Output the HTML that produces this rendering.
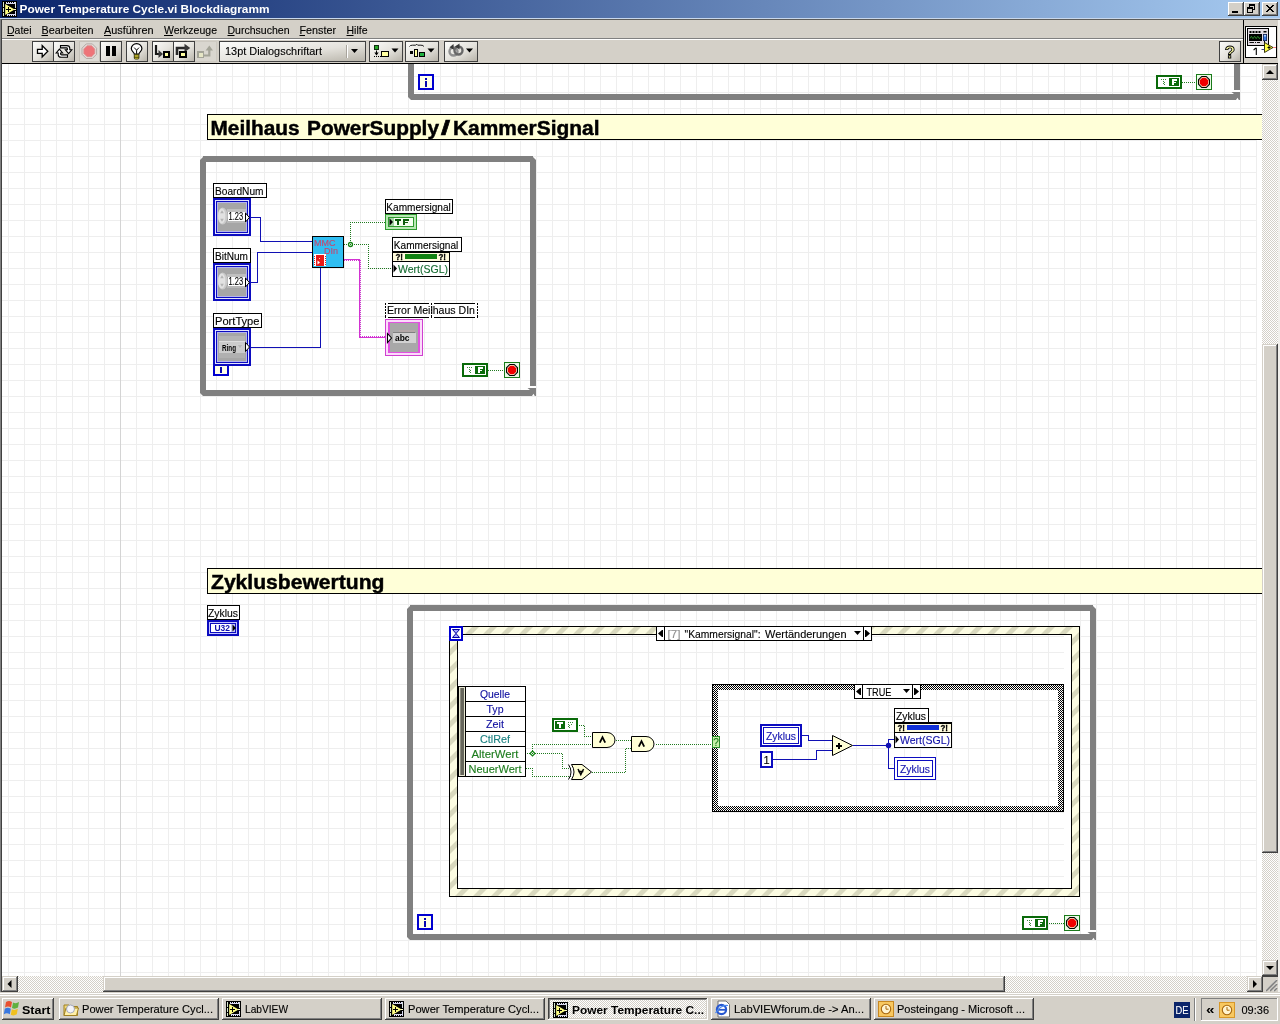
<!DOCTYPE html>
<html><head><meta charset="utf-8"><title>Power Temperature Cycle.vi Blockdiagramm</title>
<style>
html,body{margin:0;padding:0;background:#d4d0c8;overflow:hidden;}
body{width:1280px;height:1024px;font-family:"Liberation Sans",sans-serif;}
svg{display:block;position:absolute;left:0;top:0;will-change:transform;}
svg text{font-family:"Liberation Sans",sans-serif;}
</style></head><body>
<svg width="1280" height="1024" viewBox="0 0 1280 1024" shape-rendering="crispEdges">
<defs>
<linearGradient id="tg" x1="0" x2="1" y1="0" y2="0"><stop offset="0" stop-color="#0a246a"/><stop offset="1" stop-color="#a6caf0"/></linearGradient>
<linearGradient id="bg" x1="0" x2="1" y1="0" y2="1"><stop offset="0" stop-color="#fbfbf9"/><stop offset="0.55" stop-color="#e4e2dc"/><stop offset="1" stop-color="#b8b4aa"/></linearGradient>
<pattern id="grid" x="8" y="12" width="16" height="16" patternUnits="userSpaceOnUse"><rect width="16" height="16" fill="#fff"/><rect width="1" height="16" fill="#eeeeee"/><rect width="16" height="1" fill="#eeeeee"/></pattern>
<pattern id="dith" x="0" y="0" width="2" height="2" patternUnits="userSpaceOnUse"><rect width="2" height="2" fill="#fff"/><rect width="1" height="1" fill="#d4d0c8"/><rect x="1" y="1" width="1" height="1" fill="#d4d0c8"/></pattern>
<pattern id="chk" x="0" y="0" width="2" height="2" patternUnits="userSpaceOnUse"><rect width="2" height="2" fill="#fff"/><rect width="1" height="1" fill="#000"/><rect x="1" y="1" width="1" height="1" fill="#000"/></pattern>
<pattern id="stripe" x="10" y="0" width="18" height="18" patternUnits="userSpaceOnUse"><rect width="18" height="18" fill="#fcfce2"/><path d="M-2,11 L11,-2 L18,-2 L-2,18 Z M7,20 L20,7 L20,14 L14,20 Z" fill="#d9d9be" shape-rendering="geometricPrecision"/></pattern>
</defs>
<rect x="0" y="0" width="1280" height="1024" fill="#d4d0c8" />
<rect x="0" y="0" width="1280" height="18" fill="url(#tg)" />
<rect x="0" y="18" width="1280" height="1" fill="#c9d8ec" />
<rect x="0" y="19" width="1280" height="1" fill="#5c5c5a" />
<rect x="2" y="1" width="15" height="16" fill="#000" />
<rect x="3" y="2" width="1" height="5" fill="#d8e8d0" />
<rect x="3" y="8" width="1" height="4" fill="#d8e8d0" />
<rect x="3" y="13" width="1" height="3" fill="#d8e8d0" />
<rect x="6" y="3" width="10" height="1" fill="#d8d8f0" />
<rect x="7" y="14" width="9" height="1" fill="#d8d8f0" />
<rect x="6" y="2" width="1" height="1" fill="#e8e8ff" />
<rect x="7" y="15" width="1" height="1" fill="#e8e8ff" />
<rect x="8" y="2" width="1" height="1" fill="#e8e8ff" />
<rect x="9" y="15" width="1" height="1" fill="#e8e8ff" />
<rect x="10" y="2" width="1" height="1" fill="#e8e8ff" />
<rect x="11" y="15" width="1" height="1" fill="#e8e8ff" />
<rect x="12" y="2" width="1" height="1" fill="#e8e8ff" />
<rect x="13" y="15" width="1" height="1" fill="#e8e8ff" />
<rect x="14" y="2" width="1" height="1" fill="#e8e8ff" />
<rect x="15" y="15" width="1" height="1" fill="#e8e8ff" />
<rect x="15" y="2" width="1" height="6" fill="#d8e0e0" />
<rect x="15" y="11" width="1" height="5" fill="#d8d8f0" />
<path d="M5.2,4 L5.2,15 L14.6,9.5 Z" fill="#ffff86" stroke="none" stroke-width="0" shape-rendering="geometricPrecision"/>
<rect x="14" y="9" width="2" height="1" fill="#ffffd0" />
<rect x="6" y="9" width="5" height="1" fill="#000" />
<rect x="8" y="7" width="1" height="5" fill="#000" />
<text x="19.5" y="13" font-family="Liberation Sans, sans-serif" font-size="11" fill="#fff" font-weight="bold" text-anchor="start" textLength="250" lengthAdjust="spacingAndGlyphs" >Power Temperature Cycle.vi Blockdiagramm</text>
<rect x="1228" y="2" width="16" height="14" fill="#404040" />
<rect x="1228" y="2" width="15" height="13" fill="#ffffff" />
<rect x="1229" y="3" width="14" height="12" fill="#808080" />
<rect x="1229" y="3" width="13" height="11" fill="#d4d0c8" />
<rect x="1244" y="2" width="16" height="14" fill="#404040" />
<rect x="1244" y="2" width="15" height="13" fill="#ffffff" />
<rect x="1245" y="3" width="14" height="12" fill="#808080" />
<rect x="1245" y="3" width="13" height="11" fill="#d4d0c8" />
<rect x="1262" y="2" width="16" height="14" fill="#404040" />
<rect x="1262" y="2" width="15" height="13" fill="#ffffff" />
<rect x="1263" y="3" width="14" height="12" fill="#808080" />
<rect x="1263" y="3" width="13" height="11" fill="#d4d0c8" />
<rect x="1232" y="11" width="6" height="2" fill="#000" />
<rect x="1249" y="4" width="6" height="2" fill="#000" />
<rect x="1249" y="6" width="1" height="2" fill="#000" />
<rect x="1254" y="6" width="1" height="4" fill="#000" />
<rect x="1253" y="9" width="2" height="1" fill="#000" />
<rect x="1247" y="7" width="6" height="2" fill="#000" />
<rect x="1247" y="9" width="1" height="4" fill="#000" />
<rect x="1252" y="9" width="1" height="4" fill="#000" />
<rect x="1247" y="12" width="6" height="1" fill="#000" />
<path d="M1266,5 L1273,12 M1267,5 L1274,12 M1273,5 L1266,12 M1274,5 L1267,12" fill="none" stroke="#000" stroke-width="1" shape-rendering="geometricPrecision"/>
<rect x="2" y="20" width="1241" height="18" fill="#d4d0c8" />
<rect x="2" y="38" width="1241" height="1" fill="#808080" />
<rect x="2" y="39" width="1241" height="1" fill="#ffffff" />
<text x="7" y="34" font-family="Liberation Sans, sans-serif" font-size="11" fill="#000" font-weight="normal" text-anchor="start" textLength="24.5" lengthAdjust="spacingAndGlyphs" stroke="#000" stroke-width="0.12" >Datei</text>
<text x="41.5" y="34" font-family="Liberation Sans, sans-serif" font-size="11" fill="#000" font-weight="normal" text-anchor="start" textLength="52.0" lengthAdjust="spacingAndGlyphs" stroke="#000" stroke-width="0.12" >Bearbeiten</text>
<text x="104" y="34" font-family="Liberation Sans, sans-serif" font-size="11" fill="#000" font-weight="normal" text-anchor="start" textLength="49.5" lengthAdjust="spacingAndGlyphs" stroke="#000" stroke-width="0.12" >Ausführen</text>
<text x="164" y="34" font-family="Liberation Sans, sans-serif" font-size="11" fill="#000" font-weight="normal" text-anchor="start" textLength="53" lengthAdjust="spacingAndGlyphs" stroke="#000" stroke-width="0.12" >Werkzeuge</text>
<text x="227.5" y="34" font-family="Liberation Sans, sans-serif" font-size="11" fill="#000" font-weight="normal" text-anchor="start" textLength="62.0" lengthAdjust="spacingAndGlyphs" stroke="#000" stroke-width="0.12" >Durchsuchen</text>
<text x="299.5" y="34" font-family="Liberation Sans, sans-serif" font-size="11" fill="#000" font-weight="normal" text-anchor="start" textLength="36.5" lengthAdjust="spacingAndGlyphs" stroke="#000" stroke-width="0.12" >Fenster</text>
<text x="346.5" y="34" font-family="Liberation Sans, sans-serif" font-size="11" fill="#000" font-weight="normal" text-anchor="start" textLength="21.0" lengthAdjust="spacingAndGlyphs" stroke="#000" stroke-width="0.12" >Hilfe</text>
<rect x="7" y="35" width="7" height="1" fill="#000" shape-rendering="geometricPrecision"/>
<rect x="41.5" y="35" width="6.5" height="1" fill="#000" shape-rendering="geometricPrecision"/>
<rect x="104" y="35" width="7" height="1" fill="#000" shape-rendering="geometricPrecision"/>
<rect x="164" y="35" width="9" height="1" fill="#000" shape-rendering="geometricPrecision"/>
<rect x="227.5" y="35" width="7.0" height="1" fill="#000" shape-rendering="geometricPrecision"/>
<rect x="299.5" y="35" width="5.5" height="1" fill="#000" shape-rendering="geometricPrecision"/>
<rect x="346.5" y="35" width="7.0" height="1" fill="#000" shape-rendering="geometricPrecision"/>
<rect x="2" y="40" width="1241" height="23" fill="#d4d0c8" />
<rect x="0" y="63" width="1280" height="1" fill="#000" />
<rect x="0" y="19" width="1" height="973" fill="#808080" />
<rect x="1" y="20" width="1" height="972" fill="#404040" />
<rect x="32" y="41" width="22" height="21" fill="#404040" />
<rect x="33" y="42" width="20" height="19" fill="url(#bg)" />
<path d="M37.5,49.3 H42.2 V45.6 L47.8,51.3 L42.2,57 V53.3 H37.5 Z" fill="#fff" stroke="#000" stroke-width="1.3" shape-rendering="geometricPrecision"/>
<rect x="53" y="41" width="22" height="21" fill="#404040" />
<rect x="54" y="42" width="20" height="19" fill="url(#bg)" />
<path d="M60.5,45.6 H66.8 Q69.8,45.6 69.8,48.4 V49.8 H71.8 L68.6,53.6 L65.4,49.8 H67.4 V48.8 Q67.4,47.9 66.4,47.9 H60.5 Z" fill="#fff" stroke="#000" stroke-width="1.1" shape-rendering="geometricPrecision"/>
<g transform="rotate(180 64 51.4)"><path d="M60.5,45.6 H66.8 Q69.8,45.6 69.8,48.4 V49.8 H71.8 L68.6,53.6 L65.4,49.8 H67.4 V48.8 Q67.4,47.9 66.4,47.9 H60.5 Z" fill="#fff" stroke="#000" stroke-width="1.1" shape-rendering="geometricPrecision"/></g>
<rect x="79" y="41" width="21" height="21" fill="#c4c0b8" />
<rect x="80" y="42" width="19" height="19" fill="#dddbd5" />
<path d="M96.60,54.22 L92.32,58.50 L86.28,58.50 L82.00,54.22 L82.00,48.18 L86.28,43.90 L92.32,43.90 L96.60,48.18 Z" fill="#e4dcd8" stroke="#b4aaa6" stroke-width="1" shape-rendering="geometricPrecision"/>
<path d="M94.75,53.46 L91.56,56.65 L87.04,56.65 L83.85,53.46 L83.85,48.94 L87.04,45.75 L91.56,45.75 L94.75,48.94 Z" fill="#ee7478" stroke="#d89090" stroke-width="0.8" shape-rendering="geometricPrecision"/>
<rect x="100" y="41" width="22" height="21" fill="#404040" />
<rect x="101" y="42" width="20" height="19" fill="url(#bg)" />
<rect x="106" y="46" width="4" height="10" fill="#000" />
<rect x="112" y="46" width="4" height="10" fill="#000" />
<rect x="126" y="41" width="22" height="21" fill="#404040" />
<rect x="127" y="42" width="20" height="19" fill="url(#bg)" />
<g shape-rendering="geometricPrecision"><path d="M134.3,54.2 C134.3,52 131.3,51.6 131.3,48.6 A5.3,5 0 0 1 141.9,48.6 C141.9,51.6 138.9,52 138.9,54.2 Z" fill="#fff" stroke="#000" stroke-width="1.2"/><path d="M134.2,47.6 l2.4,2.6 l2.4,-2.6 M136.6,50.2 v3.6" fill="none" stroke="#000" stroke-width="1"/><rect x="134.3" y="54.4" width="4.6" height="4.6" rx="1" fill="#f0e040" stroke="#303000" stroke-width="0.9"/><path d="M134.3,56 h4.6 M134.3,57.5 h4.6" stroke="#303000" stroke-width="0.7"/></g>
<rect x="152" y="41" width="22" height="21" fill="#404040" />
<rect x="153" y="42" width="20" height="19" fill="url(#bg)" />
<path d="M156,45 V54 H159" fill="none" stroke="#181818" stroke-width="2.2" shape-rendering="geometricPrecision"/>
<path d="M158.5,50 L163,54 L158.5,58 Z" fill="#383838" stroke="none" stroke-width="0" shape-rendering="geometricPrecision"/>
<rect x="163" y="51" width="7" height="7" fill="#000" />
<rect x="164.5" y="52.5" width="3.5" height="3.5" fill="#ffffa0" />
<rect x="173" y="41" width="22" height="21" fill="#404040" />
<rect x="174" y="42" width="20" height="19" fill="url(#bg)" />
<path d="M177,55 V48 H185" fill="none" stroke="#282828" stroke-width="2.6" shape-rendering="geometricPrecision"/>
<path d="M184.5,43.8 L190.2,48 L184.5,52.2 Z" fill="#383838" stroke="none" stroke-width="0" shape-rendering="geometricPrecision"/>
<rect x="179" y="51" width="8" height="7" fill="#000" />
<rect x="180.5" y="52.5" width="4.5" height="3.5" fill="#ffffa0" />
<rect x="195" y="41" width="22" height="21" fill="#cdc9c1" />
<rect x="195" y="42" width="21" height="19" fill="#d9d6cf" />
<rect x="197" y="51" width="7" height="7" fill="#a4a498" />
<rect x="198.5" y="52.5" width="4.0" height="4.0" fill="#e6e6c6" />
<path d="M204,55.5 H209.3 V50" fill="none" stroke="#a4a498" stroke-width="2.2" shape-rendering="geometricPrecision"/>
<path d="M205.6,50.6 L209.3,45.6 L213,50.6 Z" fill="#a4a498" stroke="none" stroke-width="0" shape-rendering="geometricPrecision"/>
<rect x="219" y="41" width="147" height="21" fill="#404040" />
<rect x="220" y="42" width="145" height="19" fill="url(#bg)" />
<text x="225" y="54.5" font-family="Liberation Sans, sans-serif" font-size="11" fill="#000" font-weight="normal" text-anchor="start" textLength="97" lengthAdjust="spacingAndGlyphs" stroke="#000" stroke-width="0.12" >13pt Dialogschriftart</text>
<rect x="347" y="45" width="1" height="13" fill="#fff" />
<rect x="346" y="45" width="1" height="13" fill="#a8a49c" />
<path d="M351,49 h7 l-3.5,4 Z" fill="#000" stroke="none" stroke-width="0" shape-rendering="geometricPrecision"/>
<rect x="369" y="41" width="34" height="21" fill="#404040" />
<rect x="370" y="42" width="32" height="19" fill="url(#bg)" />
<rect x="374" y="45" width="5" height="5" fill="#103010" />
<rect x="375" y="46" width="3" height="3" fill="#28a828" />
<path d="M376.5,50.5 V55" fill="none" stroke="#000" stroke-width="1" shape-rendering="geometricPrecision"/>
<path d="M374.3,52.6 H378.7 L376.5,55.6 Z" fill="#000" stroke="none" stroke-width="0" shape-rendering="geometricPrecision"/>
<rect x="374" y="56" width="1" height="1" fill="#000" />
<rect x="376" y="56" width="1" height="1" fill="#000" />
<rect x="378" y="56" width="1" height="1" fill="#000" />
<rect x="380" y="56" width="1" height="1" fill="#000" />
<rect x="382" y="56" width="1" height="1" fill="#000" />
<rect x="384" y="56" width="1" height="1" fill="#000" />
<rect x="386" y="56" width="1" height="1" fill="#000" />
<rect x="388" y="56" width="1" height="1" fill="#000" />
<rect x="381" y="51" width="8" height="6" fill="#000" />
<rect x="382" y="52" width="6" height="3.5" fill="#ffffa0" />
<path d="M391.5,48.5 h7 l-3.5,4 Z" fill="#000" stroke="none" stroke-width="0" shape-rendering="geometricPrecision"/>
<rect x="405" y="41" width="34" height="21" fill="#404040" />
<rect x="406" y="42" width="32" height="19" fill="url(#bg)" />
<path d="M409.5,46.5 q0.5,-1.3 3,-1.3 h3.2 l1,-1 l1,1 h3.2 q2.5,0 3,1.3" fill="none" stroke="#000" stroke-width="0.9" shape-rendering="geometricPrecision"/>
<rect x="410" y="51" width="3" height="3" fill="#000" />
<rect x="414" y="49" width="4" height="8" fill="#000" />
<rect x="415" y="50" width="2" height="6" fill="#ffffa0" />
<rect x="419" y="52" width="6" height="5" fill="#000" />
<rect x="420" y="53" width="4" height="3" fill="#20b040" />
<path d="M427.5,48.5 h7 l-3.5,4 Z" fill="#000" stroke="none" stroke-width="0" shape-rendering="geometricPrecision"/>
<rect x="444" y="41" width="34" height="21" fill="#404040" />
<rect x="445" y="42" width="32" height="19" fill="url(#bg)" />
<g shape-rendering="geometricPrecision" fill="none"><circle cx="453.5" cy="51.5" r="4" stroke="#909090" stroke-width="2.4"/><circle cx="458.5" cy="50.5" r="4" stroke="#686868" stroke-width="2.4"/><path d="M453.5,44 L449.5,47.2 L453.8,49.8 Z" fill="#383838"/><path d="M459.5,43.4 L455,46.4 L459.6,49.4 Z" fill="#383838"/></g>
<path d="M466,48.5 h7 l-3.5,4 Z" fill="#000" stroke="none" stroke-width="0" shape-rendering="geometricPrecision"/>
<rect x="1219" y="41" width="22" height="21" fill="#404040" />
<rect x="1220" y="42" width="20" height="19" fill="url(#bg)" />
<g shape-rendering="geometricPrecision"><text x="1230" y="57.5" font-size="17" font-weight="bold" text-anchor="middle" fill="#ffffa8" stroke="#000" stroke-width="0.9" font-family="Liberation Sans, sans-serif">?</text></g>
<rect x="1243" y="20" width="1" height="43" fill="#000" />
<rect x="1244" y="20" width="36" height="43" fill="#d4d0c8" />
<rect x="1245" y="26" width="32" height="32" fill="#000" />
<rect x="1246" y="27" width="30" height="30" fill="#fff" />
<rect x="1247" y="28" width="22" height="18" fill="#000" />
<rect x="1248" y="29" width="20" height="16" fill="#e2dce2" />
<rect x="1249" y="34" width="13" height="7" fill="#000" />
<path d="M1250,38.5 l1.4,-2.2 l1.6,2.4 l1.6,-2.4 l1.6,2.4 l1.6,-2.4 l1.6,2.4 l1,-1.6" fill="none" stroke="#30a030" stroke-width="0.8" shape-rendering="geometricPrecision"/>
<rect x="1249.5" y="31" width="2.0" height="2" fill="#000" shape-rendering="geometricPrecision"/>
<rect x="1252.5" y="31" width="2.0" height="2" fill="#000" shape-rendering="geometricPrecision"/>
<rect x="1255.5" y="31" width="2.0" height="2" fill="#000" shape-rendering="geometricPrecision"/>
<rect x="1258.5" y="31" width="2.0" height="2" fill="#000" shape-rendering="geometricPrecision"/>
<rect x="1263.5" y="31" width="3.0" height="1.5" fill="#000" shape-rendering="geometricPrecision"/>
<rect x="1263" y="34" width="4" height="7" fill="#101030" />
<rect x="1263.6" y="34.6" width="2.800000000000182" height="5.799999999999997" fill="#3878e0" shape-rendering="geometricPrecision"/>
<rect x="1264" y="35.2" width="2" height="1.1999999999999957" fill="#c8e4ff" shape-rendering="geometricPrecision"/>
<rect x="1249.5" y="42" width="4.5" height="1" fill="#101010" shape-rendering="geometricPrecision"/>
<rect x="1255" y="42" width="1" height="1" fill="#101010" shape-rendering="geometricPrecision"/>
<rect x="1257" y="42" width="3" height="1" fill="#101010" shape-rendering="geometricPrecision"/>
<path d="M1253.6,50.2 L1255.4,48.4 H1256.3 V55" fill="none" stroke="#000" stroke-width="1.1" shape-rendering="geometricPrecision"/>
<rect x="1264" y="41" width="1" height="2" fill="#000" />
<path d="M1264.5,42.5 L1264.5,52.5 L1273,47.5 Z" fill="#ffff40" stroke="#202000" stroke-width="0.9" shape-rendering="geometricPrecision"/>
<rect x="1261.5" y="49" width="3.0" height="1" fill="#404080" shape-rendering="geometricPrecision"/>
<rect x="1267.5" y="47" width="3.0" height="1" fill="#000" shape-rendering="geometricPrecision"/>
<rect x="1268.5" y="46" width="1.0" height="3" fill="#000" shape-rendering="geometricPrecision"/>
<rect x="1273" y="47" width="3" height="1" fill="#f08080" />
<rect x="2" y="64" width="1260" height="912" fill="#fff" />
<rect x="2" y="64" width="1255" height="912" fill="url(#grid)" />
<rect x="120" y="64" width="1" height="912" fill="#d4d4d4" />
<clipPath id="cv"><rect x="2" y="64" width="1260" height="912"/></clipPath><g clip-path="url(#cv)">
<rect x="408" y="20" width="6" height="76" fill="#808080" />
<path d="M408,95 L408,97 L411,100 L414,100 L414,94 Z" fill="#808080" stroke="none" stroke-width="0" shape-rendering="geometricPrecision"/>
<rect x="414" y="94" width="820" height="6" fill="#808080" />
<rect x="1234" y="20" width="6" height="70" fill="#808080" />
<path d="M1231.5,92 L1240,92 L1240,100 L1238.8,100 L1237.5,97.8 L1236,100 L1234,100 L1234,94 Z" fill="#808080" stroke="none" stroke-width="0" shape-rendering="geometricPrecision"/>
<rect x="418" y="74" width="16" height="16" fill="#0000d0" />
<rect x="420" y="76" width="12" height="12" fill="#ffffe8" />
<rect x="425" y="78" width="2" height="2" fill="#0808b0" />
<rect x="425" y="81" width="2" height="6" fill="#0808b0" />
<rect x="1156" y="75" width="26" height="14" fill="#0a6a0a" />
<rect x="1158" y="77" width="22" height="10" fill="#fff" />
<rect x="1161" y="79" width="1" height="1" fill="#3c8c3c" />
<rect x="1163" y="79" width="1" height="1" fill="#3c8c3c" />
<rect x="1165" y="79" width="1" height="1" fill="#3c8c3c" />
<rect x="1163" y="81" width="1" height="1" fill="#3c8c3c" />
<rect x="1164" y="82" width="1" height="1" fill="#3c8c3c" />
<rect x="1163" y="83" width="1" height="1" fill="#3c8c3c" />
<rect x="1164" y="84" width="1" height="1" fill="#3c8c3c" />
<rect x="1169" y="78" width="10" height="8" fill="#0a6a0a" />
<rect x="1172" y="79" width="5" height="2" fill="#fff" />
<rect x="1172" y="79" width="2" height="6" fill="#fff" />
<rect x="1172" y="82" width="4" height="1" fill="#fff" />
<rect x="1196" y="74" width="16" height="16" fill="#1a7a1a" />
<rect x="1197" y="75" width="14" height="14" fill="#eafbe6" />
<path d="M1210.01,84.49 L1206.49,88.01 L1201.51,88.01 L1197.99,84.49 L1197.99,79.51 L1201.51,75.99 L1206.49,75.99 L1210.01,79.51 Z" fill="#000" stroke="none" stroke-width="0" shape-rendering="geometricPrecision"/>
<path d="M1208.90,84.03 L1206.03,86.90 L1201.97,86.90 L1199.10,84.03 L1199.10,79.97 L1201.97,77.10 L1206.03,77.10 L1208.90,79.97 Z" fill="#fff4d0" stroke="none" stroke-width="0" shape-rendering="geometricPrecision"/>
<path d="M1208.16,83.72 L1205.72,86.16 L1202.28,86.16 L1199.84,83.72 L1199.84,80.28 L1202.28,77.84 L1205.72,77.84 L1208.16,80.28 Z" fill="#f00000" stroke="none" stroke-width="0" shape-rendering="geometricPrecision"/>
<rect x="1182" y="82" width="1" height="1" fill="#1f7a1f" />
<rect x="1184" y="82" width="1" height="1" fill="#1f7a1f" />
<rect x="1186" y="82" width="1" height="1" fill="#1f7a1f" />
<rect x="1188" y="82" width="1" height="1" fill="#1f7a1f" />
<rect x="1190" y="82" width="1" height="1" fill="#1f7a1f" />
<rect x="1192" y="82" width="1" height="1" fill="#1f7a1f" />
<rect x="1194" y="82" width="1" height="1" fill="#1f7a1f" />
<rect x="207" y="114" width="1093" height="26" fill="#000" />
<rect x="208" y="115" width="1091" height="24" fill="#ffffd8" />
<text x="210.5" y="135" font-family="Liberation Sans, sans-serif" font-size="20.5" fill="#000" font-weight="bold" text-anchor="start" textLength="89" lengthAdjust="spacingAndGlyphs" stroke="#000" stroke-width="0.45" >Meilhaus</text>
<text x="307" y="135" font-family="Liberation Sans, sans-serif" font-size="20.5" fill="#000" font-weight="bold" text-anchor="start" textLength="132" lengthAdjust="spacingAndGlyphs" stroke="#000" stroke-width="0.45" >PowerSupply</text>
<text x="440.8" y="135" font-family="Liberation Sans, sans-serif" font-size="20.5" fill="#000" font-weight="bold" text-anchor="start" textLength="9.5" lengthAdjust="spacingAndGlyphs" stroke="#000" stroke-width="0.45" >/</text>
<text x="453" y="135" font-family="Liberation Sans, sans-serif" font-size="20.5" fill="#000" font-weight="bold" text-anchor="start" textLength="146.5" lengthAdjust="spacingAndGlyphs" stroke="#000" stroke-width="0.45" >KammerSignal</text>
<rect x="207" y="568" width="1093" height="26" fill="#000" />
<rect x="208" y="569" width="1091" height="24" fill="#ffffd8" />
<text x="211" y="589" font-family="Liberation Sans, sans-serif" font-size="20.5" fill="#000" font-weight="bold" text-anchor="start" textLength="173.5" lengthAdjust="spacingAndGlyphs" stroke="#000" stroke-width="0.45" >Zyklusbewertung</text>
<rect x="203" y="156" width="330" height="6" fill="#808080" />
<path d="M200,160 L204,156 L206,156 L206,162 L200,162 Z" fill="#808080" stroke="none" stroke-width="0" shape-rendering="geometricPrecision"/>
<path d="M536,160 L532,156 L530,156 L530,162 L536,162 Z" fill="#808080" stroke="none" stroke-width="0" shape-rendering="geometricPrecision"/>
<rect x="200" y="162" width="6" height="230" fill="#808080" />
<path d="M200,391 L200,393 L203,396 L206,396 L206,390 Z" fill="#808080" stroke="none" stroke-width="0" shape-rendering="geometricPrecision"/>
<rect x="206" y="390" width="324" height="6" fill="#808080" />
<rect x="530" y="162" width="6" height="224" fill="#808080" />
<path d="M527.5,388 L536,388 L536,396 L534.8,396 L533.5,393.8 L532,396 L530,396 L530,390 Z" fill="#808080" stroke="none" stroke-width="0" shape-rendering="geometricPrecision"/>
<rect x="213" y="360" width="16" height="16" fill="#0000d0" />
<rect x="215" y="362" width="12" height="12" fill="#ffffe8" />
<rect x="220" y="364" width="2" height="2" fill="#0808b0" />
<rect x="220" y="367" width="2" height="6" fill="#0808b0" />
<rect x="213" y="183" width="54" height="15" fill="#000" />
<rect x="214" y="184" width="52" height="13" fill="#fff" />
<text x="215" y="194.5" font-family="Liberation Sans, sans-serif" font-size="11" fill="#000" font-weight="normal" text-anchor="start" textLength="48.5" lengthAdjust="spacingAndGlyphs" stroke="#000" stroke-width="0.12" >BoardNum</text>
<rect x="213" y="198" width="38" height="38" fill="#0c0cc0" />
<rect x="215" y="200" width="34" height="34" fill="#e4e4ff" />
<rect x="216" y="201" width="32" height="32" fill="#0c0cc0" />
<rect x="217" y="202" width="30" height="30" fill="#b4b4f0" />
<rect x="218" y="203" width="28" height="28" fill="#a6a6a6" />
<g shape-rendering="geometricPrecision"><ellipse cx="222.6" cy="216" rx="5" ry="8.6" fill="#cacaca"/><ellipse cx="221.8" cy="216" rx="3.6" ry="7.6" fill="#e2e2e2"/><path d="M222,210.3 l-1.8,3 h3.6 Z M222,221.7 l-1.8,-3 h3.6 Z" fill="#b4b4b4"/></g>
<rect x="227" y="209" width="19" height="3" fill="#c0c0c0" />
<rect x="227" y="221" width="18" height="2" fill="#b8b8b8" />
<rect x="228" y="212" width="17" height="9" fill="#fff" />
<text x="228.6" y="220" font-family="Liberation Sans, sans-serif" font-size="10" fill="#000" font-weight="normal" text-anchor="start" textLength="14.5" lengthAdjust="spacingAndGlyphs" stroke="#000" stroke-width="0.12" >1.23</text>
<path d="M245.5,213 L249.3,217.5 L245.5,222 Z" fill="#fff" stroke="#000" stroke-width="1" shape-rendering="geometricPrecision"/>
<rect x="213" y="248" width="38" height="15" fill="#000" />
<rect x="214" y="249" width="36" height="13" fill="#fff" />
<text x="215" y="259.5" font-family="Liberation Sans, sans-serif" font-size="11" fill="#000" font-weight="normal" text-anchor="start" textLength="33" lengthAdjust="spacingAndGlyphs" stroke="#000" stroke-width="0.12" >BitNum</text>
<rect x="213" y="263" width="38" height="38" fill="#0c0cc0" />
<rect x="215" y="265" width="34" height="34" fill="#e4e4ff" />
<rect x="216" y="266" width="32" height="32" fill="#0c0cc0" />
<rect x="217" y="267" width="30" height="30" fill="#b4b4f0" />
<rect x="218" y="268" width="28" height="28" fill="#a6a6a6" />
<g shape-rendering="geometricPrecision"><ellipse cx="222.6" cy="281" rx="5" ry="8.6" fill="#cacaca"/><ellipse cx="221.8" cy="281" rx="3.6" ry="7.6" fill="#e2e2e2"/><path d="M222,275.3 l-1.8,3 h3.6 Z M222,286.7 l-1.8,-3 h3.6 Z" fill="#b4b4b4"/></g>
<rect x="227" y="274" width="19" height="3" fill="#c0c0c0" />
<rect x="227" y="286" width="18" height="2" fill="#b8b8b8" />
<rect x="228" y="277" width="17" height="9" fill="#fff" />
<text x="228.6" y="285" font-family="Liberation Sans, sans-serif" font-size="10" fill="#000" font-weight="normal" text-anchor="start" textLength="14.5" lengthAdjust="spacingAndGlyphs" stroke="#000" stroke-width="0.12" >1.23</text>
<path d="M245.5,278 L249.3,282.5 L245.5,287 Z" fill="#fff" stroke="#000" stroke-width="1" shape-rendering="geometricPrecision"/>
<rect x="213" y="313" width="49" height="15" fill="#000" />
<rect x="214" y="314" width="47" height="13" fill="#fff" />
<text x="215" y="324.5" font-family="Liberation Sans, sans-serif" font-size="11" fill="#000" font-weight="normal" text-anchor="start" textLength="44.5" lengthAdjust="spacingAndGlyphs" stroke="#000" stroke-width="0.12" >PortType</text>
<rect x="213" y="328" width="38" height="38" fill="#0c0cc0" />
<rect x="215" y="330" width="34" height="34" fill="#e4e4ff" />
<rect x="216" y="331" width="32" height="32" fill="#0c0cc0" />
<rect x="217" y="332" width="30" height="30" fill="#b4b4f0" />
<rect x="218" y="333" width="28" height="28" fill="#a6a6a6" />
<rect x="219" y="336" width="26" height="5" fill="#b4b4b4" />
<rect x="219" y="341" width="26" height="12" fill="#cccccc" />
<rect x="219" y="341" width="26" height="1" fill="#dedede" />
<rect x="219" y="353" width="26" height="5" fill="#b0b0b0" />
<text x="222" y="351" font-family="Liberation Sans, sans-serif" font-size="8.5" fill="#000" font-weight="bold" text-anchor="start" textLength="14" lengthAdjust="spacingAndGlyphs" >Ring</text>
<path d="M237,344.5 h6 l-3,4.5 Z" fill="#b8b8b8" stroke="#d8d8d8" stroke-width="0.6" shape-rendering="geometricPrecision"/>
<path d="M245.5,342.5 L249.5,347 L245.5,351.5 Z" fill="#fff" stroke="#000" stroke-width="1" shape-rendering="geometricPrecision"/>
<path d="M251.5,217.5 L260.5,217.5 L260.5,241.5 L312.5,241.5" fill="none" stroke="#1010b4" stroke-width="1" stroke-linecap="square" stroke-linejoin="miter" />
<path d="M251.5,282.5 L257.5,282.5 L257.5,252.5 L312.5,252.5" fill="none" stroke="#1010b4" stroke-width="1" stroke-linecap="square" stroke-linejoin="miter" />
<path d="M251.5,347.5 L320.5,347.5 L320.5,268.5" fill="none" stroke="#1010b4" stroke-width="1" stroke-linecap="square" stroke-linejoin="miter" />
<rect x="312" y="236" width="32" height="32" fill="#000" />
<rect x="313" y="237" width="30" height="30" fill="#30bef2" />
<text x="314" y="246" font-family="Liberation Sans, sans-serif" font-size="9.5" fill="#c8466e" font-weight="normal" text-anchor="start" textLength="21.5" lengthAdjust="spacingAndGlyphs" stroke="#c8466e" stroke-width="0.12" >MMC</text>
<text x="324" y="254.3" font-family="Liberation Sans, sans-serif" font-size="9.5" fill="#c8466e" font-weight="normal" text-anchor="start" textLength="14" lengthAdjust="spacingAndGlyphs" stroke="#c8466e" stroke-width="0.12" >DIn</text>
<rect x="314" y="254" width="12" height="12" fill="#fff" />
<rect x="316" y="255" width="8" height="11" fill="#e81818" />
<rect x="314" y="256" width="1" height="1" fill="#e81818" />
<rect x="325" y="256" width="1" height="1" fill="#e81818" />
<rect x="314" y="258" width="1" height="1" fill="#e81818" />
<rect x="325" y="258" width="1" height="1" fill="#e81818" />
<rect x="314" y="260" width="1" height="1" fill="#e81818" />
<rect x="325" y="260" width="1" height="1" fill="#e81818" />
<rect x="314" y="262" width="1" height="1" fill="#e81818" />
<rect x="325" y="262" width="1" height="1" fill="#e81818" />
<rect x="314" y="264" width="1" height="1" fill="#e81818" />
<rect x="325" y="264" width="1" height="1" fill="#e81818" />
<path d="M317.5,260.5 L320,262.5 L317.5,264.5 Z" fill="#fff" stroke="none" stroke-width="0" shape-rendering="geometricPrecision"/>
<rect x="319" y="258" width="1" height="1" fill="#ffd0a0" />
<rect x="344" y="244" width="1" height="1" fill="#1f7a1f" />
<rect x="346" y="244" width="1" height="1" fill="#1f7a1f" />
<rect x="348" y="244" width="1" height="1" fill="#1f7a1f" />
<rect x="350" y="222" width="1" height="1" fill="#1f7a1f" />
<rect x="350" y="224" width="1" height="1" fill="#1f7a1f" />
<rect x="350" y="226" width="1" height="1" fill="#1f7a1f" />
<rect x="350" y="228" width="1" height="1" fill="#1f7a1f" />
<rect x="350" y="230" width="1" height="1" fill="#1f7a1f" />
<rect x="350" y="232" width="1" height="1" fill="#1f7a1f" />
<rect x="350" y="234" width="1" height="1" fill="#1f7a1f" />
<rect x="350" y="236" width="1" height="1" fill="#1f7a1f" />
<rect x="350" y="238" width="1" height="1" fill="#1f7a1f" />
<rect x="350" y="240" width="1" height="1" fill="#1f7a1f" />
<rect x="350" y="222" width="1" height="1" fill="#1f7a1f" />
<rect x="352" y="222" width="1" height="1" fill="#1f7a1f" />
<rect x="354" y="222" width="1" height="1" fill="#1f7a1f" />
<rect x="356" y="222" width="1" height="1" fill="#1f7a1f" />
<rect x="358" y="222" width="1" height="1" fill="#1f7a1f" />
<rect x="360" y="222" width="1" height="1" fill="#1f7a1f" />
<rect x="362" y="222" width="1" height="1" fill="#1f7a1f" />
<rect x="364" y="222" width="1" height="1" fill="#1f7a1f" />
<rect x="366" y="222" width="1" height="1" fill="#1f7a1f" />
<rect x="368" y="222" width="1" height="1" fill="#1f7a1f" />
<rect x="370" y="222" width="1" height="1" fill="#1f7a1f" />
<rect x="372" y="222" width="1" height="1" fill="#1f7a1f" />
<rect x="374" y="222" width="1" height="1" fill="#1f7a1f" />
<rect x="376" y="222" width="1" height="1" fill="#1f7a1f" />
<rect x="378" y="222" width="1" height="1" fill="#1f7a1f" />
<rect x="380" y="222" width="1" height="1" fill="#1f7a1f" />
<rect x="382" y="222" width="1" height="1" fill="#1f7a1f" />
<rect x="384" y="222" width="1" height="1" fill="#1f7a1f" />
<rect x="354" y="244" width="1" height="1" fill="#1f7a1f" />
<rect x="356" y="244" width="1" height="1" fill="#1f7a1f" />
<rect x="358" y="244" width="1" height="1" fill="#1f7a1f" />
<rect x="360" y="244" width="1" height="1" fill="#1f7a1f" />
<rect x="362" y="244" width="1" height="1" fill="#1f7a1f" />
<rect x="364" y="244" width="1" height="1" fill="#1f7a1f" />
<rect x="366" y="244" width="1" height="1" fill="#1f7a1f" />
<rect x="368" y="244" width="1" height="1" fill="#1f7a1f" />
<rect x="368" y="244" width="1" height="1" fill="#1f7a1f" />
<rect x="368" y="246" width="1" height="1" fill="#1f7a1f" />
<rect x="368" y="248" width="1" height="1" fill="#1f7a1f" />
<rect x="368" y="250" width="1" height="1" fill="#1f7a1f" />
<rect x="368" y="252" width="1" height="1" fill="#1f7a1f" />
<rect x="368" y="254" width="1" height="1" fill="#1f7a1f" />
<rect x="368" y="256" width="1" height="1" fill="#1f7a1f" />
<rect x="368" y="258" width="1" height="1" fill="#1f7a1f" />
<rect x="368" y="260" width="1" height="1" fill="#1f7a1f" />
<rect x="368" y="262" width="1" height="1" fill="#1f7a1f" />
<rect x="368" y="264" width="1" height="1" fill="#1f7a1f" />
<rect x="368" y="266" width="1" height="1" fill="#1f7a1f" />
<rect x="368" y="268" width="1" height="1" fill="#1f7a1f" />
<rect x="368" y="268" width="1" height="1" fill="#1f7a1f" />
<rect x="370" y="268" width="1" height="1" fill="#1f7a1f" />
<rect x="372" y="268" width="1" height="1" fill="#1f7a1f" />
<rect x="374" y="268" width="1" height="1" fill="#1f7a1f" />
<rect x="376" y="268" width="1" height="1" fill="#1f7a1f" />
<rect x="378" y="268" width="1" height="1" fill="#1f7a1f" />
<rect x="380" y="268" width="1" height="1" fill="#1f7a1f" />
<rect x="382" y="268" width="1" height="1" fill="#1f7a1f" />
<rect x="384" y="268" width="1" height="1" fill="#1f7a1f" />
<rect x="386" y="268" width="1" height="1" fill="#1f7a1f" />
<rect x="388" y="268" width="1" height="1" fill="#1f7a1f" />
<rect x="390" y="268" width="1" height="1" fill="#1f7a1f" />
<g shape-rendering="geometricPrecision"><circle cx="350.5" cy="244.5" r="2" fill="#fff" stroke="#128212" stroke-width="1.3"/><rect x="350" y="244" width="1" height="1" fill="#128212"/></g>
<rect x="344" y="259" width="16" height="1" fill="#d232d2" />
<rect x="359" y="259" width="1" height="79" fill="#d232d2" />
<rect x="359" y="337" width="26" height="1" fill="#d232d2" />
<rect x="344" y="260" width="1" height="1" fill="#d232d2" />
<rect x="346" y="260" width="1" height="1" fill="#d232d2" />
<rect x="348" y="260" width="1" height="1" fill="#d232d2" />
<rect x="350" y="260" width="1" height="1" fill="#d232d2" />
<rect x="352" y="260" width="1" height="1" fill="#d232d2" />
<rect x="354" y="260" width="1" height="1" fill="#d232d2" />
<rect x="356" y="260" width="1" height="1" fill="#d232d2" />
<rect x="358" y="260" width="1" height="1" fill="#d232d2" />
<rect x="360" y="260" width="1" height="1" fill="#d232d2" />
<rect x="360" y="262" width="1" height="1" fill="#d232d2" />
<rect x="360" y="264" width="1" height="1" fill="#d232d2" />
<rect x="360" y="266" width="1" height="1" fill="#d232d2" />
<rect x="360" y="268" width="1" height="1" fill="#d232d2" />
<rect x="360" y="270" width="1" height="1" fill="#d232d2" />
<rect x="360" y="272" width="1" height="1" fill="#d232d2" />
<rect x="360" y="274" width="1" height="1" fill="#d232d2" />
<rect x="360" y="276" width="1" height="1" fill="#d232d2" />
<rect x="360" y="278" width="1" height="1" fill="#d232d2" />
<rect x="360" y="280" width="1" height="1" fill="#d232d2" />
<rect x="360" y="282" width="1" height="1" fill="#d232d2" />
<rect x="360" y="284" width="1" height="1" fill="#d232d2" />
<rect x="360" y="286" width="1" height="1" fill="#d232d2" />
<rect x="360" y="288" width="1" height="1" fill="#d232d2" />
<rect x="360" y="290" width="1" height="1" fill="#d232d2" />
<rect x="360" y="292" width="1" height="1" fill="#d232d2" />
<rect x="360" y="294" width="1" height="1" fill="#d232d2" />
<rect x="360" y="296" width="1" height="1" fill="#d232d2" />
<rect x="360" y="298" width="1" height="1" fill="#d232d2" />
<rect x="360" y="300" width="1" height="1" fill="#d232d2" />
<rect x="360" y="302" width="1" height="1" fill="#d232d2" />
<rect x="360" y="304" width="1" height="1" fill="#d232d2" />
<rect x="360" y="306" width="1" height="1" fill="#d232d2" />
<rect x="360" y="308" width="1" height="1" fill="#d232d2" />
<rect x="360" y="310" width="1" height="1" fill="#d232d2" />
<rect x="360" y="312" width="1" height="1" fill="#d232d2" />
<rect x="360" y="314" width="1" height="1" fill="#d232d2" />
<rect x="360" y="316" width="1" height="1" fill="#d232d2" />
<rect x="360" y="318" width="1" height="1" fill="#d232d2" />
<rect x="360" y="320" width="1" height="1" fill="#d232d2" />
<rect x="360" y="322" width="1" height="1" fill="#d232d2" />
<rect x="360" y="324" width="1" height="1" fill="#d232d2" />
<rect x="360" y="326" width="1" height="1" fill="#d232d2" />
<rect x="360" y="328" width="1" height="1" fill="#d232d2" />
<rect x="360" y="330" width="1" height="1" fill="#d232d2" />
<rect x="360" y="332" width="1" height="1" fill="#d232d2" />
<rect x="360" y="334" width="1" height="1" fill="#d232d2" />
<rect x="360" y="336" width="1" height="1" fill="#d232d2" />
<rect x="362" y="336" width="1" height="1" fill="#d232d2" />
<rect x="364" y="336" width="1" height="1" fill="#d232d2" />
<rect x="366" y="336" width="1" height="1" fill="#d232d2" />
<rect x="368" y="336" width="1" height="1" fill="#d232d2" />
<rect x="370" y="336" width="1" height="1" fill="#d232d2" />
<rect x="372" y="336" width="1" height="1" fill="#d232d2" />
<rect x="374" y="336" width="1" height="1" fill="#d232d2" />
<rect x="376" y="336" width="1" height="1" fill="#d232d2" />
<rect x="378" y="336" width="1" height="1" fill="#d232d2" />
<rect x="380" y="336" width="1" height="1" fill="#d232d2" />
<rect x="382" y="336" width="1" height="1" fill="#d232d2" />
<rect x="384" y="336" width="1" height="1" fill="#d232d2" />
<rect x="385" y="199" width="68" height="15" fill="#000" />
<rect x="386" y="200" width="66" height="13" fill="#fff" />
<text x="386.3" y="210.5" font-family="Liberation Sans, sans-serif" font-size="11" fill="#000" font-weight="normal" text-anchor="start" textLength="64.5" lengthAdjust="spacingAndGlyphs" stroke="#000" stroke-width="0.12" >Kammersignal</text>
<rect x="385" y="214" width="32" height="16" fill="#2c9a2c" />
<rect x="386" y="215" width="30" height="14" fill="#b8e8b4" />
<rect x="388" y="217" width="26" height="10" fill="#2c9a2c" />
<rect x="389" y="218" width="24" height="8" fill="#f4fff0" />
<rect x="389" y="218" width="5" height="8" fill="#a4d4a4" />
<path d="M389.5,218.3 L393,222 L389.5,225.7 Z" fill="#000" stroke="none" stroke-width="0" shape-rendering="geometricPrecision"/>
<rect x="395" y="219" width="6" height="2" fill="#0c5c0c" />
<rect x="397" y="219" width="2" height="6" fill="#0c5c0c" />
<rect x="403" y="219" width="2" height="6" fill="#0c5c0c" />
<rect x="403" y="219" width="6" height="2" fill="#0c5c0c" />
<rect x="403" y="222" width="5" height="1" fill="#0c5c0c" />
<rect x="392" y="237" width="70" height="15" fill="#000" />
<rect x="393" y="238" width="68" height="13" fill="#fff" />
<text x="393.8" y="248.5" font-family="Liberation Sans, sans-serif" font-size="11" fill="#000" font-weight="normal" text-anchor="start" textLength="64.5" lengthAdjust="spacingAndGlyphs" stroke="#000" stroke-width="0.12" >Kammersignal</text>
<rect x="392" y="251" width="58" height="26" fill="#000" />
<rect x="393" y="253" width="56" height="8" fill="#fffbdc" />
<rect x="393" y="262" width="56" height="14" fill="#fff" />
<text x="395.5" y="260.3" font-family="Liberation Sans, sans-serif" font-size="8.5" fill="#000" font-weight="bold" text-anchor="start" textLength="7.5" lengthAdjust="spacingAndGlyphs" stroke="#000" stroke-width="0.3">?!</text>
<text x="438.5" y="260.3" font-family="Liberation Sans, sans-serif" font-size="8.5" fill="#000" font-weight="bold" text-anchor="start" textLength="7.5" lengthAdjust="spacingAndGlyphs" stroke="#000" stroke-width="0.3">?!</text>
<rect x="405" y="254" width="32" height="5" fill="#128212" />
<path d="M393.5,264.5 L397,268.5 L393.5,272.5 Z" fill="#000" stroke="none" stroke-width="0" shape-rendering="geometricPrecision"/>
<text x="398" y="273" font-family="Liberation Sans, sans-serif" font-size="11" fill="#146a30" font-weight="normal" text-anchor="start" textLength="50" lengthAdjust="spacingAndGlyphs" stroke="#146a30" stroke-width="0.12" >Wert(SGL)</text>
<rect x="385" y="303" width="93" height="15" fill="#fff" />
<rect x="388" y="303" width="41" height="1" fill="#000" />
<rect x="434" y="303" width="41" height="1" fill="#000" />
<rect x="388" y="317" width="41" height="1" fill="#000" />
<rect x="434" y="317" width="41" height="1" fill="#000" />
<rect x="385" y="303" width="1" height="2" fill="#000" />
<rect x="385" y="306" width="1" height="2" fill="#000" />
<rect x="385" y="309" width="1" height="2" fill="#000" />
<rect x="385" y="312" width="1" height="2" fill="#000" />
<rect x="385" y="315" width="1" height="2" fill="#000" />
<rect x="385" y="317" width="1" height="1" fill="#000" />
<rect x="431" y="303" width="1" height="2" fill="#000" />
<rect x="431" y="306" width="1" height="2" fill="#000" />
<rect x="431" y="309" width="1" height="2" fill="#000" />
<rect x="431" y="312" width="1" height="2" fill="#000" />
<rect x="431" y="315" width="1" height="2" fill="#000" />
<rect x="431" y="317" width="1" height="1" fill="#000" />
<rect x="477" y="303" width="1" height="2" fill="#000" />
<rect x="477" y="306" width="1" height="2" fill="#000" />
<rect x="477" y="309" width="1" height="2" fill="#000" />
<rect x="477" y="312" width="1" height="2" fill="#000" />
<rect x="477" y="315" width="1" height="2" fill="#000" />
<rect x="477" y="317" width="1" height="1" fill="#000" />
<text x="387" y="314" font-family="Liberation Sans, sans-serif" font-size="11" fill="#000" font-weight="normal" text-anchor="start" textLength="88" lengthAdjust="spacingAndGlyphs" stroke="#000" stroke-width="0.12" >Error Meilhaus DIn</text>
<rect x="385" y="319" width="38" height="37" fill="#d040d0" />
<rect x="386" y="320" width="36" height="35" fill="#fbdcfb" />
<rect x="388" y="322" width="32" height="31" fill="#e052e0" />
<rect x="390" y="323" width="28" height="29" fill="#a8a8a8" />
<rect x="393" y="332" width="22" height="1" fill="#808080" />
<rect x="399" y="330" width="16" height="2" fill="#b4a8a8" />
<rect x="393" y="333" width="23" height="10" fill="#d2d2d2" />
<text x="395" y="341" font-family="Liberation Sans, sans-serif" font-size="9.5" fill="#000" font-weight="bold" text-anchor="start" textLength="14.5" lengthAdjust="spacingAndGlyphs" >abc</text>
<path d="M387.5,333.5 L391.5,338 L387.5,342.5 Z" fill="#fff" stroke="#000" stroke-width="1.1" shape-rendering="geometricPrecision"/>
<rect x="462" y="363" width="26" height="14" fill="#0a6a0a" />
<rect x="464" y="365" width="22" height="10" fill="#fff" />
<rect x="467" y="367" width="1" height="1" fill="#3c8c3c" />
<rect x="469" y="367" width="1" height="1" fill="#3c8c3c" />
<rect x="471" y="367" width="1" height="1" fill="#3c8c3c" />
<rect x="469" y="369" width="1" height="1" fill="#3c8c3c" />
<rect x="470" y="370" width="1" height="1" fill="#3c8c3c" />
<rect x="469" y="371" width="1" height="1" fill="#3c8c3c" />
<rect x="470" y="372" width="1" height="1" fill="#3c8c3c" />
<rect x="475" y="366" width="10" height="8" fill="#0a6a0a" />
<rect x="478" y="367" width="5" height="2" fill="#fff" />
<rect x="478" y="367" width="2" height="6" fill="#fff" />
<rect x="478" y="370" width="4" height="1" fill="#fff" />
<rect x="504" y="362" width="16" height="16" fill="#1a7a1a" />
<rect x="505" y="363" width="14" height="14" fill="#eafbe6" />
<path d="M518.01,372.49 L514.49,376.01 L509.51,376.01 L505.99,372.49 L505.99,367.51 L509.51,363.99 L514.49,363.99 L518.01,367.51 Z" fill="#000" stroke="none" stroke-width="0" shape-rendering="geometricPrecision"/>
<path d="M516.90,372.03 L514.03,374.90 L509.97,374.90 L507.10,372.03 L507.10,367.97 L509.97,365.10 L514.03,365.10 L516.90,367.97 Z" fill="#fff4d0" stroke="none" stroke-width="0" shape-rendering="geometricPrecision"/>
<path d="M516.16,371.72 L513.72,374.16 L510.28,374.16 L507.84,371.72 L507.84,368.28 L510.28,365.84 L513.72,365.84 L516.16,368.28 Z" fill="#f00000" stroke="none" stroke-width="0" shape-rendering="geometricPrecision"/>
<rect x="488" y="370" width="1" height="1" fill="#1f7a1f" />
<rect x="490" y="370" width="1" height="1" fill="#1f7a1f" />
<rect x="492" y="370" width="1" height="1" fill="#1f7a1f" />
<rect x="494" y="370" width="1" height="1" fill="#1f7a1f" />
<rect x="496" y="370" width="1" height="1" fill="#1f7a1f" />
<rect x="498" y="370" width="1" height="1" fill="#1f7a1f" />
<rect x="500" y="370" width="1" height="1" fill="#1f7a1f" />
<rect x="502" y="370" width="1" height="1" fill="#1f7a1f" />
<rect x="207" y="605" width="33" height="15" fill="#000" />
<rect x="208" y="606" width="31" height="13" fill="#fff" />
<text x="208" y="616.5" font-family="Liberation Sans, sans-serif" font-size="11" fill="#000" font-weight="normal" text-anchor="start" textLength="30" lengthAdjust="spacingAndGlyphs" stroke="#000" stroke-width="0.12" >Zyklus</text>
<rect x="207" y="620" width="32" height="16" fill="#0c0cc0" />
<rect x="209" y="622" width="28" height="12" fill="#c4c4ff" />
<rect x="210" y="623" width="26" height="10" fill="#0c0cc0" />
<rect x="211" y="624" width="24" height="8" fill="#fff" />
<rect x="231" y="624" width="4" height="8" fill="#c0c0f4" />
<text x="214.5" y="631" font-family="Liberation Sans, sans-serif" font-size="8.5" fill="#1010b0" font-weight="bold" text-anchor="start" textLength="15.5" lengthAdjust="spacingAndGlyphs" >U32</text>
<path d="M232.5,624.5 L236,628 L232.5,631.5 Z" fill="#000" stroke="none" stroke-width="0" shape-rendering="geometricPrecision"/>
<rect x="410" y="605" width="683" height="6" fill="#808080" />
<path d="M407,609 L411,605 L413,605 L413,611 L407,611 Z" fill="#808080" stroke="none" stroke-width="0" shape-rendering="geometricPrecision"/>
<path d="M1096,609 L1092,605 L1090,605 L1090,611 L1096,611 Z" fill="#808080" stroke="none" stroke-width="0" shape-rendering="geometricPrecision"/>
<rect x="407" y="611" width="6" height="325" fill="#808080" />
<path d="M407,935 L407,937 L410,940 L413,940 L413,934 Z" fill="#808080" stroke="none" stroke-width="0" shape-rendering="geometricPrecision"/>
<rect x="413" y="934" width="677" height="6" fill="#808080" />
<rect x="1090" y="611" width="6" height="319" fill="#808080" />
<path d="M1087.5,932 L1096,932 L1096,940 L1094.8,940 L1093.5,937.8 L1092,940 L1090,940 L1090,934 Z" fill="#808080" stroke="none" stroke-width="0" shape-rendering="geometricPrecision"/>
<rect x="417" y="914" width="16" height="16" fill="#0000d0" />
<rect x="419" y="916" width="12" height="12" fill="#ffffe8" />
<rect x="424" y="918" width="2" height="2" fill="#0808b0" />
<rect x="424" y="921" width="2" height="6" fill="#0808b0" />
<rect x="1022" y="916" width="26" height="14" fill="#0a6a0a" />
<rect x="1024" y="918" width="22" height="10" fill="#fff" />
<rect x="1027" y="920" width="1" height="1" fill="#3c8c3c" />
<rect x="1029" y="920" width="1" height="1" fill="#3c8c3c" />
<rect x="1031" y="920" width="1" height="1" fill="#3c8c3c" />
<rect x="1029" y="922" width="1" height="1" fill="#3c8c3c" />
<rect x="1030" y="923" width="1" height="1" fill="#3c8c3c" />
<rect x="1029" y="924" width="1" height="1" fill="#3c8c3c" />
<rect x="1030" y="925" width="1" height="1" fill="#3c8c3c" />
<rect x="1035" y="919" width="10" height="8" fill="#0a6a0a" />
<rect x="1038" y="920" width="5" height="2" fill="#fff" />
<rect x="1038" y="920" width="2" height="6" fill="#fff" />
<rect x="1038" y="923" width="4" height="1" fill="#fff" />
<rect x="1064" y="915" width="16" height="16" fill="#1a7a1a" />
<rect x="1065" y="916" width="14" height="14" fill="#eafbe6" />
<path d="M1078.01,925.49 L1074.49,929.01 L1069.51,929.01 L1065.99,925.49 L1065.99,920.51 L1069.51,916.99 L1074.49,916.99 L1078.01,920.51 Z" fill="#000" stroke="none" stroke-width="0" shape-rendering="geometricPrecision"/>
<path d="M1076.90,925.03 L1074.03,927.90 L1069.97,927.90 L1067.10,925.03 L1067.10,920.97 L1069.97,918.10 L1074.03,918.10 L1076.90,920.97 Z" fill="#fff4d0" stroke="none" stroke-width="0" shape-rendering="geometricPrecision"/>
<path d="M1076.16,924.72 L1073.72,927.16 L1070.28,927.16 L1067.84,924.72 L1067.84,921.28 L1070.28,918.84 L1073.72,918.84 L1076.16,921.28 Z" fill="#f00000" stroke="none" stroke-width="0" shape-rendering="geometricPrecision"/>
<rect x="1049" y="923" width="1" height="1" fill="#1f7a1f" />
<rect x="1051" y="923" width="1" height="1" fill="#1f7a1f" />
<rect x="1053" y="923" width="1" height="1" fill="#1f7a1f" />
<rect x="1055" y="923" width="1" height="1" fill="#1f7a1f" />
<rect x="1057" y="923" width="1" height="1" fill="#1f7a1f" />
<rect x="1059" y="923" width="1" height="1" fill="#1f7a1f" />
<rect x="1061" y="923" width="1" height="1" fill="#1f7a1f" />
<rect x="1063" y="923" width="1" height="1" fill="#1f7a1f" />
<rect x="449" y="626" width="631" height="271" fill="#000" />
<rect x="450" y="627" width="629" height="269" fill="url(#stripe)" />
<rect x="457" y="634" width="615" height="255" fill="#000" />
<rect x="458" y="635" width="613" height="253" fill="#fff" />
<rect x="458" y="635" width="606" height="253" fill="url(#grid)" />
<rect x="449" y="626" width="14" height="15" fill="#0000d0" />
<rect x="451" y="628" width="10" height="11" fill="#fff" />
<path d="M452.5,629.5 H459.5 L456,633.5 L459.5,637.5 H452.5 L456,633.5 Z" fill="#a0a0ff" stroke="#0000a0" stroke-width="1" shape-rendering="geometricPrecision"/>
<rect x="656" y="626" width="216" height="15" fill="#000" />
<rect x="657" y="627" width="214" height="13" fill="#fff" />
<rect x="664" y="626" width="1" height="15" fill="#000" />
<rect x="863" y="626" width="1" height="15" fill="#000" />
<path d="M662,630.0 L658,633.5 L662,637.0 Z" fill="#000" stroke="none" stroke-width="0" shape-rendering="geometricPrecision"/>
<rect x="662" y="630.0" width="1" height="7.0" fill="#000" shape-rendering="geometricPrecision"/>
<path d="M866,630.0 L870,633.5 L866,637.0 Z" fill="#000" stroke="none" stroke-width="0" shape-rendering="geometricPrecision"/>
<rect x="865" y="630.0" width="1" height="7.0" fill="#000" shape-rendering="geometricPrecision"/>
<path d="M854,631.0 h7 l-3.5,4 Z" fill="#000" stroke="none" stroke-width="0" shape-rendering="geometricPrecision"/>
<text x="667.5" y="637.5" font-family="Liberation Sans, sans-serif" font-size="11" fill="#909090" font-weight="normal" text-anchor="start" textLength="13" lengthAdjust="spacingAndGlyphs" stroke="#909090" stroke-width="0.12" >[7]</text>
<text x="684.5" y="637.5" font-family="Liberation Sans, sans-serif" font-size="11" fill="#000" font-weight="normal" text-anchor="start" textLength="76" lengthAdjust="spacingAndGlyphs" stroke="#000" stroke-width="0.12" >&quot;Kammersignal&quot;:</text>
<text x="765" y="637.5" font-family="Liberation Sans, sans-serif" font-size="11" fill="#000" font-weight="normal" text-anchor="start" textLength="81.5" lengthAdjust="spacingAndGlyphs" stroke="#000" stroke-width="0.12" >Wertänderungen</text>
<rect x="458" y="686" width="68" height="91" fill="#000" />
<rect x="459" y="687" width="6" height="89" fill="#e6e6d0" />
<rect x="460" y="688" width="4" height="87" fill="#66665c" />
<rect x="460" y="688" width="1" height="87" fill="#8c8c80" />
<rect x="466" y="687" width="59" height="14" fill="#fff" />
<text x="495" y="698" font-family="Liberation Sans, sans-serif" font-size="11" fill="#1010a0" font-weight="normal" text-anchor="middle" textLength="30" lengthAdjust="spacingAndGlyphs" stroke="#1010a0" stroke-width="0.12" >Quelle</text>
<rect x="466" y="702" width="59" height="14" fill="#fff" />
<text x="495" y="713" font-family="Liberation Sans, sans-serif" font-size="11" fill="#1010a0" font-weight="normal" text-anchor="middle" textLength="17" lengthAdjust="spacingAndGlyphs" stroke="#1010a0" stroke-width="0.12" >Typ</text>
<rect x="466" y="717" width="59" height="14" fill="#fff" />
<text x="495" y="728" font-family="Liberation Sans, sans-serif" font-size="11" fill="#1010a0" font-weight="normal" text-anchor="middle" textLength="18" lengthAdjust="spacingAndGlyphs" stroke="#1010a0" stroke-width="0.12" >Zeit</text>
<rect x="466" y="732" width="59" height="14" fill="#fff" />
<text x="495" y="743" font-family="Liberation Sans, sans-serif" font-size="11" fill="#1a8080" font-weight="normal" text-anchor="middle" textLength="30" lengthAdjust="spacingAndGlyphs" stroke="#1a8080" stroke-width="0.12" >CtlRef</text>
<rect x="466" y="747" width="59" height="14" fill="#fff" />
<text x="495" y="758" font-family="Liberation Sans, sans-serif" font-size="11" fill="#1c7c1c" font-weight="normal" text-anchor="middle" textLength="47" lengthAdjust="spacingAndGlyphs" stroke="#1c7c1c" stroke-width="0.12" >AlterWert</text>
<rect x="466" y="762" width="59" height="14" fill="#fff" />
<text x="495" y="773" font-family="Liberation Sans, sans-serif" font-size="11" fill="#1c7c1c" font-weight="normal" text-anchor="middle" textLength="53" lengthAdjust="spacingAndGlyphs" stroke="#1c7c1c" stroke-width="0.12" >NeuerWert</text>
<rect x="552" y="718" width="26" height="14" fill="#0a6a0a" />
<rect x="554" y="720" width="22" height="10" fill="#fff" />
<rect x="555" y="721" width="10" height="8" fill="#0a6a0a" />
<rect x="557" y="722" width="6" height="2" fill="#fff" />
<rect x="559" y="722" width="2" height="6" fill="#fff" />
<rect x="568" y="722" width="1" height="1" fill="#3c8c3c" />
<rect x="570" y="722" width="1" height="1" fill="#3c8c3c" />
<rect x="572" y="722" width="1" height="1" fill="#3c8c3c" />
<rect x="568" y="724" width="1" height="1" fill="#3c8c3c" />
<rect x="569" y="725" width="1" height="1" fill="#3c8c3c" />
<rect x="568" y="726" width="1" height="1" fill="#3c8c3c" />
<rect x="569" y="727" width="1" height="1" fill="#3c8c3c" />
<rect x="571" y="724" width="1" height="1" fill="#3c8c3c" />
<rect x="579" y="725" width="1" height="1" fill="#1f7a1f" />
<rect x="581" y="725" width="1" height="1" fill="#1f7a1f" />
<rect x="583" y="725" width="1" height="1" fill="#1f7a1f" />
<rect x="584" y="726" width="1" height="1" fill="#1f7a1f" />
<rect x="584" y="728" width="1" height="1" fill="#1f7a1f" />
<rect x="584" y="730" width="1" height="1" fill="#1f7a1f" />
<rect x="584" y="732" width="1" height="1" fill="#1f7a1f" />
<rect x="584" y="734" width="1" height="1" fill="#1f7a1f" />
<rect x="584" y="736" width="1" height="1" fill="#1f7a1f" />
<rect x="584" y="736" width="1" height="1" fill="#1f7a1f" />
<rect x="586" y="736" width="1" height="1" fill="#1f7a1f" />
<rect x="588" y="736" width="1" height="1" fill="#1f7a1f" />
<rect x="590" y="736" width="1" height="1" fill="#1f7a1f" />
<rect x="527" y="753" width="1" height="1" fill="#1f7a1f" />
<rect x="529" y="753" width="1" height="1" fill="#1f7a1f" />
<rect x="532" y="744" width="1" height="1" fill="#1f7a1f" />
<rect x="532" y="746" width="1" height="1" fill="#1f7a1f" />
<rect x="532" y="748" width="1" height="1" fill="#1f7a1f" />
<rect x="532" y="750" width="1" height="1" fill="#1f7a1f" />
<rect x="532" y="744" width="1" height="1" fill="#1f7a1f" />
<rect x="534" y="744" width="1" height="1" fill="#1f7a1f" />
<rect x="536" y="744" width="1" height="1" fill="#1f7a1f" />
<rect x="538" y="744" width="1" height="1" fill="#1f7a1f" />
<rect x="540" y="744" width="1" height="1" fill="#1f7a1f" />
<rect x="542" y="744" width="1" height="1" fill="#1f7a1f" />
<rect x="544" y="744" width="1" height="1" fill="#1f7a1f" />
<rect x="546" y="744" width="1" height="1" fill="#1f7a1f" />
<rect x="548" y="744" width="1" height="1" fill="#1f7a1f" />
<rect x="550" y="744" width="1" height="1" fill="#1f7a1f" />
<rect x="552" y="744" width="1" height="1" fill="#1f7a1f" />
<rect x="554" y="744" width="1" height="1" fill="#1f7a1f" />
<rect x="556" y="744" width="1" height="1" fill="#1f7a1f" />
<rect x="558" y="744" width="1" height="1" fill="#1f7a1f" />
<rect x="560" y="744" width="1" height="1" fill="#1f7a1f" />
<rect x="562" y="744" width="1" height="1" fill="#1f7a1f" />
<rect x="564" y="744" width="1" height="1" fill="#1f7a1f" />
<rect x="566" y="744" width="1" height="1" fill="#1f7a1f" />
<rect x="568" y="744" width="1" height="1" fill="#1f7a1f" />
<rect x="570" y="744" width="1" height="1" fill="#1f7a1f" />
<rect x="572" y="744" width="1" height="1" fill="#1f7a1f" />
<rect x="574" y="744" width="1" height="1" fill="#1f7a1f" />
<rect x="576" y="744" width="1" height="1" fill="#1f7a1f" />
<rect x="578" y="744" width="1" height="1" fill="#1f7a1f" />
<rect x="580" y="744" width="1" height="1" fill="#1f7a1f" />
<rect x="582" y="744" width="1" height="1" fill="#1f7a1f" />
<rect x="584" y="744" width="1" height="1" fill="#1f7a1f" />
<rect x="586" y="744" width="1" height="1" fill="#1f7a1f" />
<rect x="588" y="744" width="1" height="1" fill="#1f7a1f" />
<rect x="590" y="744" width="1" height="1" fill="#1f7a1f" />
<rect x="535" y="753" width="1" height="1" fill="#1f7a1f" />
<rect x="537" y="753" width="1" height="1" fill="#1f7a1f" />
<rect x="539" y="753" width="1" height="1" fill="#1f7a1f" />
<rect x="541" y="753" width="1" height="1" fill="#1f7a1f" />
<rect x="543" y="753" width="1" height="1" fill="#1f7a1f" />
<rect x="545" y="753" width="1" height="1" fill="#1f7a1f" />
<rect x="547" y="753" width="1" height="1" fill="#1f7a1f" />
<rect x="549" y="753" width="1" height="1" fill="#1f7a1f" />
<rect x="551" y="753" width="1" height="1" fill="#1f7a1f" />
<rect x="553" y="753" width="1" height="1" fill="#1f7a1f" />
<rect x="555" y="753" width="1" height="1" fill="#1f7a1f" />
<rect x="557" y="753" width="1" height="1" fill="#1f7a1f" />
<rect x="559" y="753" width="1" height="1" fill="#1f7a1f" />
<rect x="561" y="753" width="1" height="1" fill="#1f7a1f" />
<rect x="562" y="754" width="1" height="1" fill="#1f7a1f" />
<rect x="562" y="756" width="1" height="1" fill="#1f7a1f" />
<rect x="562" y="758" width="1" height="1" fill="#1f7a1f" />
<rect x="562" y="760" width="1" height="1" fill="#1f7a1f" />
<rect x="562" y="762" width="1" height="1" fill="#1f7a1f" />
<rect x="562" y="764" width="1" height="1" fill="#1f7a1f" />
<rect x="562" y="766" width="1" height="1" fill="#1f7a1f" />
<rect x="562" y="768" width="1" height="1" fill="#1f7a1f" />
<rect x="562" y="768" width="1" height="1" fill="#1f7a1f" />
<rect x="564" y="768" width="1" height="1" fill="#1f7a1f" />
<rect x="566" y="768" width="1" height="1" fill="#1f7a1f" />
<rect x="568" y="768" width="1" height="1" fill="#1f7a1f" />
<rect x="570" y="768" width="1" height="1" fill="#1f7a1f" />
<rect x="526" y="768" width="1" height="1" fill="#1f7a1f" />
<rect x="528" y="768" width="1" height="1" fill="#1f7a1f" />
<rect x="530" y="768" width="1" height="1" fill="#1f7a1f" />
<rect x="532" y="768" width="1" height="1" fill="#1f7a1f" />
<rect x="532" y="768" width="1" height="1" fill="#1f7a1f" />
<rect x="532" y="770" width="1" height="1" fill="#1f7a1f" />
<rect x="532" y="772" width="1" height="1" fill="#1f7a1f" />
<rect x="532" y="774" width="1" height="1" fill="#1f7a1f" />
<rect x="532" y="776" width="1" height="1" fill="#1f7a1f" />
<rect x="532" y="776" width="1" height="1" fill="#1f7a1f" />
<rect x="534" y="776" width="1" height="1" fill="#1f7a1f" />
<rect x="536" y="776" width="1" height="1" fill="#1f7a1f" />
<rect x="538" y="776" width="1" height="1" fill="#1f7a1f" />
<rect x="540" y="776" width="1" height="1" fill="#1f7a1f" />
<rect x="542" y="776" width="1" height="1" fill="#1f7a1f" />
<rect x="544" y="776" width="1" height="1" fill="#1f7a1f" />
<rect x="546" y="776" width="1" height="1" fill="#1f7a1f" />
<rect x="548" y="776" width="1" height="1" fill="#1f7a1f" />
<rect x="550" y="776" width="1" height="1" fill="#1f7a1f" />
<rect x="552" y="776" width="1" height="1" fill="#1f7a1f" />
<rect x="554" y="776" width="1" height="1" fill="#1f7a1f" />
<rect x="556" y="776" width="1" height="1" fill="#1f7a1f" />
<rect x="558" y="776" width="1" height="1" fill="#1f7a1f" />
<rect x="560" y="776" width="1" height="1" fill="#1f7a1f" />
<rect x="562" y="776" width="1" height="1" fill="#1f7a1f" />
<rect x="564" y="776" width="1" height="1" fill="#1f7a1f" />
<rect x="566" y="776" width="1" height="1" fill="#1f7a1f" />
<rect x="568" y="776" width="1" height="1" fill="#1f7a1f" />
<rect x="570" y="776" width="1" height="1" fill="#1f7a1f" />
<g shape-rendering="geometricPrecision"><path d="M532.5,751 L535,753.5 L532.5,756 L530,753.5 Z" fill="#fff" stroke="#128212" stroke-width="1.2"/><rect x="532" y="753" width="1" height="1" fill="#128212"/></g>
<path d="M592.5,732.5 H607 A8,7.5 0 0 1 607,747.5 H592.5 Z" fill="#ffffd6" stroke="#000" stroke-width="1" shape-rendering="geometricPrecision"/>
<path d="M599.8,742.6 L602.5,737.2 L605.2,742.6" fill="none" stroke="#000" stroke-width="1.8" shape-rendering="geometricPrecision"/>
<rect x="616" y="740" width="1" height="1" fill="#1f7a1f" />
<rect x="618" y="740" width="1" height="1" fill="#1f7a1f" />
<rect x="620" y="740" width="1" height="1" fill="#1f7a1f" />
<rect x="622" y="740" width="1" height="1" fill="#1f7a1f" />
<rect x="624" y="740" width="1" height="1" fill="#1f7a1f" />
<rect x="626" y="740" width="1" height="1" fill="#1f7a1f" />
<rect x="628" y="740" width="1" height="1" fill="#1f7a1f" />
<rect x="630" y="740" width="1" height="1" fill="#1f7a1f" />
<path d="M571.5,764.5 H582 L591.5,772 L582,779.5 H571.5 Q576.5,772 571.5,764.5 Z" fill="#ffffd6" stroke="#000" stroke-width="1" shape-rendering="geometricPrecision"/>
<path d="M568.5,764.5 Q573.5,772 568.5,779.5" fill="none" stroke="#000" stroke-width="1" shape-rendering="geometricPrecision"/>
<path d="M578,769 L580.8,774.6 L583.6,769 M578.2,771.6 H583.4" fill="none" stroke="#000" stroke-width="1.5" shape-rendering="geometricPrecision"/>
<rect x="592" y="772" width="1" height="1" fill="#1f7a1f" />
<rect x="594" y="772" width="1" height="1" fill="#1f7a1f" />
<rect x="596" y="772" width="1" height="1" fill="#1f7a1f" />
<rect x="598" y="772" width="1" height="1" fill="#1f7a1f" />
<rect x="600" y="772" width="1" height="1" fill="#1f7a1f" />
<rect x="602" y="772" width="1" height="1" fill="#1f7a1f" />
<rect x="604" y="772" width="1" height="1" fill="#1f7a1f" />
<rect x="606" y="772" width="1" height="1" fill="#1f7a1f" />
<rect x="608" y="772" width="1" height="1" fill="#1f7a1f" />
<rect x="610" y="772" width="1" height="1" fill="#1f7a1f" />
<rect x="612" y="772" width="1" height="1" fill="#1f7a1f" />
<rect x="614" y="772" width="1" height="1" fill="#1f7a1f" />
<rect x="616" y="772" width="1" height="1" fill="#1f7a1f" />
<rect x="618" y="772" width="1" height="1" fill="#1f7a1f" />
<rect x="620" y="772" width="1" height="1" fill="#1f7a1f" />
<rect x="622" y="772" width="1" height="1" fill="#1f7a1f" />
<rect x="624" y="772" width="1" height="1" fill="#1f7a1f" />
<rect x="625" y="749" width="1" height="1" fill="#1f7a1f" />
<rect x="625" y="751" width="1" height="1" fill="#1f7a1f" />
<rect x="625" y="753" width="1" height="1" fill="#1f7a1f" />
<rect x="625" y="755" width="1" height="1" fill="#1f7a1f" />
<rect x="625" y="757" width="1" height="1" fill="#1f7a1f" />
<rect x="625" y="759" width="1" height="1" fill="#1f7a1f" />
<rect x="625" y="761" width="1" height="1" fill="#1f7a1f" />
<rect x="625" y="763" width="1" height="1" fill="#1f7a1f" />
<rect x="625" y="765" width="1" height="1" fill="#1f7a1f" />
<rect x="625" y="767" width="1" height="1" fill="#1f7a1f" />
<rect x="625" y="769" width="1" height="1" fill="#1f7a1f" />
<rect x="625" y="771" width="1" height="1" fill="#1f7a1f" />
<rect x="626" y="748" width="1" height="1" fill="#1f7a1f" />
<rect x="628" y="748" width="1" height="1" fill="#1f7a1f" />
<rect x="630" y="748" width="1" height="1" fill="#1f7a1f" />
<path d="M631.5,736.5 H646 A8,7.5 0 0 1 646,751.5 H631.5 Z" fill="#ffffd6" stroke="#000" stroke-width="1" shape-rendering="geometricPrecision"/>
<path d="M638.8,746.6 L641.5,741.2 L644.2,746.6" fill="none" stroke="#000" stroke-width="1.8" shape-rendering="geometricPrecision"/>
<rect x="656" y="744" width="1" height="1" fill="#1f7a1f" />
<rect x="658" y="744" width="1" height="1" fill="#1f7a1f" />
<rect x="660" y="744" width="1" height="1" fill="#1f7a1f" />
<rect x="662" y="744" width="1" height="1" fill="#1f7a1f" />
<rect x="664" y="744" width="1" height="1" fill="#1f7a1f" />
<rect x="666" y="744" width="1" height="1" fill="#1f7a1f" />
<rect x="668" y="744" width="1" height="1" fill="#1f7a1f" />
<rect x="670" y="744" width="1" height="1" fill="#1f7a1f" />
<rect x="672" y="744" width="1" height="1" fill="#1f7a1f" />
<rect x="674" y="744" width="1" height="1" fill="#1f7a1f" />
<rect x="676" y="744" width="1" height="1" fill="#1f7a1f" />
<rect x="678" y="744" width="1" height="1" fill="#1f7a1f" />
<rect x="680" y="744" width="1" height="1" fill="#1f7a1f" />
<rect x="682" y="744" width="1" height="1" fill="#1f7a1f" />
<rect x="684" y="744" width="1" height="1" fill="#1f7a1f" />
<rect x="686" y="744" width="1" height="1" fill="#1f7a1f" />
<rect x="688" y="744" width="1" height="1" fill="#1f7a1f" />
<rect x="690" y="744" width="1" height="1" fill="#1f7a1f" />
<rect x="692" y="744" width="1" height="1" fill="#1f7a1f" />
<rect x="694" y="744" width="1" height="1" fill="#1f7a1f" />
<rect x="696" y="744" width="1" height="1" fill="#1f7a1f" />
<rect x="698" y="744" width="1" height="1" fill="#1f7a1f" />
<rect x="700" y="744" width="1" height="1" fill="#1f7a1f" />
<rect x="702" y="744" width="1" height="1" fill="#1f7a1f" />
<rect x="704" y="744" width="1" height="1" fill="#1f7a1f" />
<rect x="706" y="744" width="1" height="1" fill="#1f7a1f" />
<rect x="708" y="744" width="1" height="1" fill="#1f7a1f" />
<rect x="710" y="744" width="1" height="1" fill="#1f7a1f" />
<rect x="712" y="684" width="352" height="128" fill="#000" />
<rect x="713" y="685" width="350" height="126" fill="url(#chk)" />
<rect x="718" y="690" width="340" height="116" fill="#fff" />
<rect x="718" y="690" width="340" height="116" fill="url(#grid)" />
<rect x="854" y="684" width="67" height="15" fill="#000" />
<rect x="855" y="685" width="65" height="13" fill="#fff" />
<rect x="862" y="684" width="1" height="15" fill="#000" />
<rect x="912" y="684" width="1" height="15" fill="#000" />
<path d="M860,688.0 L856,691.5 L860,695.0 Z" fill="#000" stroke="none" stroke-width="0" shape-rendering="geometricPrecision"/>
<rect x="860" y="688.0" width="1" height="7.0" fill="#000" shape-rendering="geometricPrecision"/>
<path d="M915,688.0 L919,691.5 L915,695.0 Z" fill="#000" stroke="none" stroke-width="0" shape-rendering="geometricPrecision"/>
<rect x="914" y="688.0" width="1" height="7.0" fill="#000" shape-rendering="geometricPrecision"/>
<path d="M903,689.0 h7 l-3.5,4 Z" fill="#000" stroke="none" stroke-width="0" shape-rendering="geometricPrecision"/>
<text x="866.5" y="695.5" font-family="Liberation Sans, sans-serif" font-size="11" fill="#000" font-weight="normal" text-anchor="start" textLength="25" lengthAdjust="spacingAndGlyphs" stroke="#000" stroke-width="0.12" >TRUE</text>
<rect x="712" y="736" width="8" height="12" fill="#2a8a2a" />
<rect x="713" y="737" width="6" height="10" fill="#c6f0a8" />
<text x="716" y="746" font-family="Liberation Sans, sans-serif" font-size="10" fill="#1c7c1c" font-weight="normal" text-anchor="middle" stroke="#1c7c1c" stroke-width="0.12" >?</text>
<rect x="760" y="724" width="42" height="23" fill="#0c0cc0" />
<rect x="762" y="726" width="38" height="19" fill="#fff" />
<rect x="763" y="727" width="36" height="17" fill="#0c0cc0" />
<rect x="764" y="728" width="34" height="15" fill="#fff" />
<text x="766" y="739.5" font-family="Liberation Sans, sans-serif" font-size="11" fill="#1414b0" font-weight="normal" text-anchor="start" textLength="30" lengthAdjust="spacingAndGlyphs" stroke="#1414b0" stroke-width="0.12" >Zyklus</text>
<rect x="760" y="751" width="13" height="17" fill="#0c0cc0" />
<rect x="762" y="753" width="9" height="13" fill="#fff" />
<text x="766.5" y="764" font-family="Liberation Sans, sans-serif" font-size="11" fill="#000" font-weight="normal" text-anchor="middle" stroke="#000" stroke-width="0.12" >1</text>
<path d="M802.5,735.5 L808.5,735.5 L808.5,740.5 L832.5,740.5" fill="none" stroke="#1010b4" stroke-width="1" stroke-linecap="square" stroke-linejoin="miter" />
<path d="M773.5,759.5 L816.5,759.5 L816.5,750.5 L832.5,750.5" fill="none" stroke="#1010b4" stroke-width="1" stroke-linecap="square" stroke-linejoin="miter" />
<path d="M832.5,735.5 L852.5,745.5 L832.5,755.5 Z" fill="#ffffd6" stroke="#000" stroke-width="1" shape-rendering="geometricPrecision"/>
<rect x="836" y="745" width="6" height="1.5" fill="#000" />
<rect x="838.2" y="742.8" width="1.599999999999909" height="6.0" fill="#000" />
<path d="M853.5,745.5 L888.5,745.5" fill="none" stroke="#1010b4" stroke-width="1" stroke-linecap="square" stroke-linejoin="miter" />
<path d="M888.5,745.5 L888.5,739.5 L894.5,739.5" fill="none" stroke="#1010b4" stroke-width="1" stroke-linecap="square" stroke-linejoin="miter" />
<path d="M888.5,745.5 L888.5,768.5 L894.5,768.5" fill="none" stroke="#1010b4" stroke-width="1" stroke-linecap="square" stroke-linejoin="miter" />
<circle cx="888.5" cy="745.5" r="2.7" fill="#1010b4" shape-rendering="geometricPrecision"/>
<rect x="894" y="708" width="35" height="15" fill="#000" />
<rect x="895" y="709" width="33" height="13" fill="#fff" />
<text x="896" y="719.5" font-family="Liberation Sans, sans-serif" font-size="11" fill="#000" font-weight="normal" text-anchor="start" textLength="30" lengthAdjust="spacingAndGlyphs" stroke="#000" stroke-width="0.12" >Zyklus</text>
<rect x="894" y="722" width="58" height="26" fill="#000" />
<rect x="895" y="724" width="56" height="8" fill="#fffbdc" />
<rect x="895" y="733" width="56" height="14" fill="#fff" />
<text x="897.5" y="731.3" font-family="Liberation Sans, sans-serif" font-size="8.5" fill="#000" font-weight="bold" text-anchor="start" textLength="7.5" lengthAdjust="spacingAndGlyphs" stroke="#000" stroke-width="0.3">?!</text>
<text x="940.5" y="731.3" font-family="Liberation Sans, sans-serif" font-size="8.5" fill="#000" font-weight="bold" text-anchor="start" textLength="7.5" lengthAdjust="spacingAndGlyphs" stroke="#000" stroke-width="0.3">?!</text>
<rect x="907" y="725" width="32" height="5" fill="#1030d8" />
<path d="M895.5,735.5 L899,739.5 L895.5,743.5 Z" fill="#000" stroke="none" stroke-width="0" shape-rendering="geometricPrecision"/>
<text x="900" y="744" font-family="Liberation Sans, sans-serif" font-size="11" fill="#1010a8" font-weight="normal" text-anchor="start" textLength="50" lengthAdjust="spacingAndGlyphs" stroke="#1010a8" stroke-width="0.12" >Wert(SGL)</text>
<rect x="894" y="757" width="42" height="23" fill="#0c0cc0" />
<rect x="895" y="758" width="40" height="21" fill="#fff" />
<rect x="897" y="760" width="36" height="17" fill="#0c0cc0" />
<rect x="898" y="761" width="34" height="15" fill="#fff" />
<text x="900" y="772.5" font-family="Liberation Sans, sans-serif" font-size="11" fill="#1414b0" font-weight="normal" text-anchor="start" textLength="30" lengthAdjust="spacingAndGlyphs" stroke="#1414b0" stroke-width="0.12" >Zyklus</text>
</g>
<rect x="1262" y="64" width="16" height="912" fill="url(#dith)" />
<rect x="1262" y="64" width="16" height="16" fill="#404040" />
<rect x="1262" y="64" width="15" height="15" fill="#d4d0c8" />
<rect x="1263" y="65" width="14" height="14" fill="#808080" />
<rect x="1263" y="65" width="13" height="13" fill="#ffffff" />
<rect x="1264" y="66" width="12" height="12" fill="#d4d0c8" />
<path d="M1266,74 L1270,70 L1274,74 Z" fill="#000" stroke="none" stroke-width="0" shape-rendering="geometricPrecision"/>
<rect x="1262" y="344" width="16" height="509" fill="#404040" />
<rect x="1262" y="344" width="15" height="508" fill="#d4d0c8" />
<rect x="1263" y="345" width="14" height="507" fill="#808080" />
<rect x="1263" y="345" width="13" height="506" fill="#ffffff" />
<rect x="1264" y="346" width="12" height="505" fill="#d4d0c8" />
<rect x="1262" y="960" width="16" height="16" fill="#404040" />
<rect x="1262" y="960" width="15" height="15" fill="#d4d0c8" />
<rect x="1263" y="961" width="14" height="14" fill="#808080" />
<rect x="1263" y="961" width="13" height="13" fill="#ffffff" />
<rect x="1264" y="962" width="12" height="12" fill="#d4d0c8" />
<path d="M1266,966 L1270,970 L1274,966 Z" fill="#000" stroke="none" stroke-width="0" shape-rendering="geometricPrecision"/>
<rect x="2" y="976" width="1260" height="16" fill="url(#dith)" />
<rect x="2" y="976" width="16" height="16" fill="#404040" />
<rect x="2" y="976" width="15" height="15" fill="#d4d0c8" />
<rect x="3" y="977" width="14" height="14" fill="#808080" />
<rect x="3" y="977" width="13" height="13" fill="#ffffff" />
<rect x="4" y="978" width="12" height="12" fill="#d4d0c8" />
<path d="M11.5,980 L7.5,984 L11.5,988 Z" fill="#000" stroke="none" stroke-width="0" shape-rendering="geometricPrecision"/>
<rect x="103" y="976" width="902" height="16" fill="#404040" />
<rect x="103" y="976" width="901" height="15" fill="#d4d0c8" />
<rect x="104" y="977" width="900" height="14" fill="#808080" />
<rect x="104" y="977" width="899" height="13" fill="#ffffff" />
<rect x="105" y="978" width="898" height="12" fill="#d4d0c8" />
<rect x="1247" y="976" width="16" height="16" fill="#404040" />
<rect x="1247" y="976" width="15" height="15" fill="#d4d0c8" />
<rect x="1248" y="977" width="14" height="14" fill="#808080" />
<rect x="1248" y="977" width="13" height="13" fill="#ffffff" />
<rect x="1249" y="978" width="12" height="12" fill="#d4d0c8" />
<path d="M1253,980 L1257,984 L1253,988 Z" fill="#000" stroke="none" stroke-width="0" shape-rendering="geometricPrecision"/>
<rect x="1263" y="976" width="15" height="16" fill="#d4d0c8" />
<rect x="1262" y="976" width="1" height="16" fill="#404040" />
<rect x="1263" y="976" width="15" height="1" fill="#404040" />
<path d="M1265,991 L1277,979" fill="none" stroke="#fff" stroke-width="1" shape-rendering="geometricPrecision"/>
<path d="M1266,991 L1277,980" fill="none" stroke="#808080" stroke-width="1.6" shape-rendering="geometricPrecision"/>
<path d="M1269,991 L1277,983" fill="none" stroke="#fff" stroke-width="1" shape-rendering="geometricPrecision"/>
<path d="M1270,991 L1277,984" fill="none" stroke="#808080" stroke-width="1.6" shape-rendering="geometricPrecision"/>
<path d="M1273,991 L1277,987" fill="none" stroke="#fff" stroke-width="1" shape-rendering="geometricPrecision"/>
<path d="M1274,991 L1277,988" fill="none" stroke="#808080" stroke-width="1.6" shape-rendering="geometricPrecision"/>
<rect x="1278" y="20" width="2" height="974" fill="#f1f0ec" />
<rect x="0" y="992" width="1280" height="1" fill="#d4d0c8" />
<rect x="0" y="993" width="1280" height="1" fill="#ffffff" />
<rect x="0" y="994" width="1280" height="30" fill="#d4d0c8" />
<rect x="0" y="995" width="1280" height="1" fill="#ffffff" />
<rect x="2" y="998" width="52" height="22" fill="#404040" />
<rect x="2" y="998" width="51" height="21" fill="#ffffff" />
<rect x="3" y="999" width="50" height="20" fill="#808080" />
<rect x="3" y="999" width="49" height="19" fill="#d4d0c8" />
<g shape-rendering="geometricPrecision"><path d="M6,1002 q3,-2 6,0 l-1,5.5 q-3,-2 -6,0 Z" fill="#e85030"/><path d="M13,1002.5 q3,1.5 6,-0.5 l-1,5.5 q-3,2 -6,0.5 Z" fill="#60b040"/><path d="M4.8,1008.8 q3,-2 6,0 l-1,5.5 q-3,-2 -6,0 Z" fill="#3878e0"/><path d="M11.8,1009.3 q3,1.5 6,-0.5 l-1,5.5 q-3,2 -6,0.5 Z" fill="#f0c020"/></g>
<text x="22" y="1014" font-family="Liberation Sans, sans-serif" font-size="11" fill="#000" font-weight="bold" text-anchor="start" textLength="28.5" lengthAdjust="spacingAndGlyphs" >Start</text>
<rect x="59" y="998" width="160" height="22" fill="#404040" />
<rect x="59" y="998" width="159" height="21" fill="#ffffff" />
<rect x="60" y="999" width="158" height="20" fill="#808080" />
<rect x="60" y="999" width="157" height="19" fill="#d4d0c8" />
<g shape-rendering="geometricPrecision"><path d="M64,1005 h5 l1.5,1.5 h7 v9 h-13.5 Z" fill="#f0d878" stroke="#a08020" stroke-width="1"/><path d="M66,1008 h12.5 l-2,7.5 h-12.5 Z" fill="#fff0a8" stroke="#a08020" stroke-width="1"/><circle cx="70.5" cy="1009" r="4" fill="#f4f4fa" stroke="#9098b0" stroke-width="0.8"/></g>
<text x="82" y="1013" font-family="Liberation Sans, sans-serif" font-size="11" fill="#000" font-weight="normal" text-anchor="start" textLength="131" lengthAdjust="spacingAndGlyphs" stroke="#000" stroke-width="0.12" >Power Temperature Cycl...</text>
<rect x="222" y="998" width="160" height="22" fill="#404040" />
<rect x="222" y="998" width="159" height="21" fill="#ffffff" />
<rect x="223" y="999" width="158" height="20" fill="#808080" />
<rect x="223" y="999" width="157" height="19" fill="#d4d0c8" />
<rect x="226" y="1001" width="15" height="16" fill="#000" />
<rect x="227" y="1002" width="1" height="5" fill="#d8e8d0" />
<rect x="227" y="1008" width="1" height="4" fill="#d8e8d0" />
<rect x="227" y="1013" width="1" height="3" fill="#d8e8d0" />
<rect x="230" y="1003" width="10" height="1" fill="#d8d8f0" />
<rect x="231" y="1014" width="9" height="1" fill="#d8d8f0" />
<rect x="230" y="1002" width="1" height="1" fill="#e8e8ff" />
<rect x="231" y="1015" width="1" height="1" fill="#e8e8ff" />
<rect x="232" y="1002" width="1" height="1" fill="#e8e8ff" />
<rect x="233" y="1015" width="1" height="1" fill="#e8e8ff" />
<rect x="234" y="1002" width="1" height="1" fill="#e8e8ff" />
<rect x="235" y="1015" width="1" height="1" fill="#e8e8ff" />
<rect x="236" y="1002" width="1" height="1" fill="#e8e8ff" />
<rect x="237" y="1015" width="1" height="1" fill="#e8e8ff" />
<rect x="238" y="1002" width="1" height="1" fill="#e8e8ff" />
<rect x="239" y="1015" width="1" height="1" fill="#e8e8ff" />
<rect x="239" y="1002" width="1" height="6" fill="#d8e0e0" />
<rect x="239" y="1011" width="1" height="5" fill="#d8d8f0" />
<path d="M229.2,1004 L229.2,1015 L238.6,1009.5 Z" fill="#ffff86" stroke="none" stroke-width="0" shape-rendering="geometricPrecision"/>
<rect x="238" y="1009" width="2" height="1" fill="#ffffd0" />
<rect x="230" y="1009" width="5" height="1" fill="#000" />
<rect x="232" y="1007" width="1" height="5" fill="#000" />
<text x="245" y="1013" font-family="Liberation Sans, sans-serif" font-size="11" fill="#000" font-weight="normal" text-anchor="start" textLength="43" lengthAdjust="spacingAndGlyphs" stroke="#000" stroke-width="0.12" >LabVIEW</text>
<rect x="385" y="998" width="160" height="22" fill="#404040" />
<rect x="385" y="998" width="159" height="21" fill="#ffffff" />
<rect x="386" y="999" width="158" height="20" fill="#808080" />
<rect x="386" y="999" width="157" height="19" fill="#d4d0c8" />
<rect x="389" y="1001" width="15" height="16" fill="#000" />
<rect x="390" y="1002" width="1" height="5" fill="#d8e8d0" />
<rect x="390" y="1008" width="1" height="4" fill="#d8e8d0" />
<rect x="390" y="1013" width="1" height="3" fill="#d8e8d0" />
<rect x="393" y="1003" width="10" height="1" fill="#d8d8f0" />
<rect x="394" y="1014" width="9" height="1" fill="#d8d8f0" />
<rect x="393" y="1002" width="1" height="1" fill="#e8e8ff" />
<rect x="394" y="1015" width="1" height="1" fill="#e8e8ff" />
<rect x="395" y="1002" width="1" height="1" fill="#e8e8ff" />
<rect x="396" y="1015" width="1" height="1" fill="#e8e8ff" />
<rect x="397" y="1002" width="1" height="1" fill="#e8e8ff" />
<rect x="398" y="1015" width="1" height="1" fill="#e8e8ff" />
<rect x="399" y="1002" width="1" height="1" fill="#e8e8ff" />
<rect x="400" y="1015" width="1" height="1" fill="#e8e8ff" />
<rect x="401" y="1002" width="1" height="1" fill="#e8e8ff" />
<rect x="402" y="1015" width="1" height="1" fill="#e8e8ff" />
<rect x="402" y="1002" width="1" height="6" fill="#d8e0e0" />
<rect x="402" y="1011" width="1" height="5" fill="#d8d8f0" />
<path d="M392.2,1004 L392.2,1015 L401.6,1009.5 Z" fill="#ffff86" stroke="none" stroke-width="0" shape-rendering="geometricPrecision"/>
<rect x="401" y="1009" width="2" height="1" fill="#ffffd0" />
<rect x="393" y="1009" width="5" height="1" fill="#000" />
<rect x="395" y="1007" width="1" height="5" fill="#000" />
<text x="408" y="1013" font-family="Liberation Sans, sans-serif" font-size="11" fill="#000" font-weight="normal" text-anchor="start" textLength="131" lengthAdjust="spacingAndGlyphs" stroke="#000" stroke-width="0.12" >Power Temperature Cycl...</text>
<rect x="548" y="998" width="160" height="22" fill="#ffffff" />
<rect x="548" y="998" width="159" height="21" fill="#404040" />
<rect x="549" y="999" width="158" height="20" fill="#d4d0c8" />
<rect x="549" y="999" width="157" height="19" fill="#808080" />
<rect x="550" y="1000" width="156" height="18" fill="url(#dith)" />
<rect x="553" y="1002" width="15" height="16" fill="#000" />
<rect x="554" y="1003" width="1" height="5" fill="#d8e8d0" />
<rect x="554" y="1009" width="1" height="4" fill="#d8e8d0" />
<rect x="554" y="1014" width="1" height="3" fill="#d8e8d0" />
<rect x="557" y="1004" width="10" height="1" fill="#d8d8f0" />
<rect x="558" y="1015" width="9" height="1" fill="#d8d8f0" />
<rect x="557" y="1003" width="1" height="1" fill="#e8e8ff" />
<rect x="558" y="1016" width="1" height="1" fill="#e8e8ff" />
<rect x="559" y="1003" width="1" height="1" fill="#e8e8ff" />
<rect x="560" y="1016" width="1" height="1" fill="#e8e8ff" />
<rect x="561" y="1003" width="1" height="1" fill="#e8e8ff" />
<rect x="562" y="1016" width="1" height="1" fill="#e8e8ff" />
<rect x="563" y="1003" width="1" height="1" fill="#e8e8ff" />
<rect x="564" y="1016" width="1" height="1" fill="#e8e8ff" />
<rect x="565" y="1003" width="1" height="1" fill="#e8e8ff" />
<rect x="566" y="1016" width="1" height="1" fill="#e8e8ff" />
<rect x="566" y="1003" width="1" height="6" fill="#d8e0e0" />
<rect x="566" y="1012" width="1" height="5" fill="#d8d8f0" />
<path d="M556.2,1005 L556.2,1016 L565.6,1010.5 Z" fill="#ffff86" stroke="none" stroke-width="0" shape-rendering="geometricPrecision"/>
<rect x="565" y="1010" width="2" height="1" fill="#ffffd0" />
<rect x="557" y="1010" width="5" height="1" fill="#000" />
<rect x="559" y="1008" width="1" height="5" fill="#000" />
<text x="572" y="1014" font-family="Liberation Sans, sans-serif" font-size="11" fill="#000" font-weight="bold" text-anchor="start" textLength="132" lengthAdjust="spacingAndGlyphs" >Power Temperature C...</text>
<rect x="711" y="998" width="160" height="22" fill="#404040" />
<rect x="711" y="998" width="159" height="21" fill="#ffffff" />
<rect x="712" y="999" width="158" height="20" fill="#808080" />
<rect x="712" y="999" width="157" height="19" fill="#d4d0c8" />
<g shape-rendering="geometricPrecision"><path d="M718,1001 h8 l3.5,3.5 v12.5 h-11.5 Z" fill="#fff" stroke="#707070" stroke-width="1"/><circle cx="721.5" cy="1009.5" r="4.6" fill="none" stroke="#2858d0" stroke-width="2.2"/><path d="M717,1009.8 h9" stroke="#2858d0" stroke-width="1.8"/><path d="M715.5,1013 q6,-9 12.5,-7.5" stroke="#4888f0" stroke-width="1.2" fill="none"/></g>
<text x="734" y="1013" font-family="Liberation Sans, sans-serif" font-size="11" fill="#000" font-weight="normal" text-anchor="start" textLength="130" lengthAdjust="spacingAndGlyphs" stroke="#000" stroke-width="0.12" >LabVIEWforum.de -&gt; An...</text>
<rect x="874" y="998" width="160" height="22" fill="#404040" />
<rect x="874" y="998" width="159" height="21" fill="#ffffff" />
<rect x="875" y="999" width="158" height="20" fill="#808080" />
<rect x="875" y="999" width="157" height="19" fill="#d4d0c8" />
<g shape-rendering="geometricPrecision"><rect x="878.5" y="1001.5" width="15" height="15" fill="#f8c860" stroke="#c88820" stroke-width="1"/><circle cx="886" cy="1009" r="4.7" fill="#fff4d0" stroke="#a86810" stroke-width="1.1"/><path d="M886,1006 v3.2 h2.6" fill="none" stroke="#a86810" stroke-width="1"/></g>
<text x="897" y="1013" font-family="Liberation Sans, sans-serif" font-size="11" fill="#000" font-weight="normal" text-anchor="start" textLength="128" lengthAdjust="spacingAndGlyphs" stroke="#000" stroke-width="0.12" >Posteingang - Microsoft ...</text>
<rect x="1174" y="1002" width="16" height="16" fill="#0a246a" />
<text x="1175.5" y="1014" font-family="Liberation Sans, sans-serif" font-size="11" fill="#fff" font-weight="normal" text-anchor="start" textLength="13" lengthAdjust="spacingAndGlyphs" stroke="#fff" stroke-width="0.12" >DE</text>
<rect x="1194" y="998" width="1" height="23" fill="#808080" />
<rect x="1195" y="998" width="1" height="23" fill="#fff" />
<rect x="1201" y="998" width="77" height="23" fill="#ffffff" />
<rect x="1201" y="998" width="76" height="22" fill="#808080" />
<rect x="1202" y="999" width="75" height="21" fill="#d4d0c8" />
<text x="1206" y="1014" font-family="Liberation Sans, sans-serif" font-size="12" fill="#000" font-weight="bold" text-anchor="start" textLength="8.5" lengthAdjust="spacingAndGlyphs" >«</text>
<g shape-rendering="geometricPrecision"><rect x="1219.5" y="1002.5" width="15" height="15" fill="#f8c860" stroke="#d89828" stroke-width="1"/><circle cx="1227" cy="1010" r="4.7" fill="#fff4d0" stroke="#a86810" stroke-width="1.1"/><path d="M1227,1007 v3.2 h2.6" fill="none" stroke="#a86810" stroke-width="1"/></g>
<text x="1241.5" y="1014" font-family="Liberation Sans, sans-serif" font-size="11" fill="#000" font-weight="normal" text-anchor="start" textLength="27.5" lengthAdjust="spacingAndGlyphs" stroke="#000" stroke-width="0.12" >09:36</text>
</svg>
</body></html>
